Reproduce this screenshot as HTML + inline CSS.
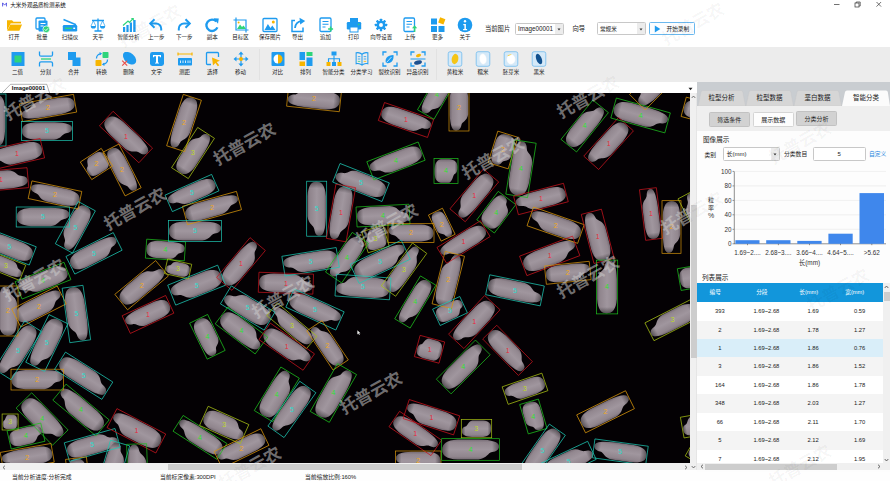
<!DOCTYPE html>
<html><head><meta charset="utf-8"><title>大米外观品质检测系统</title>
<style>
html,body{margin:0;padding:0}
body{width:890px;height:481px;overflow:hidden;position:relative;background:#fff;font-family:"Liberation Sans","Noto Sans CJK SC",sans-serif;color:#222}
div,span,svg{box-sizing:border-box}
.lb{position:absolute;width:40px;text-align:center;font-size:5.500px;line-height:8px;color:#222;white-space:nowrap}
.t{position:absolute;font-size:6px;line-height:8px;white-space:nowrap;color:#222}
.ptab{position:absolute;top:90.400px;height:15.500px;font-size:6.500px;line-height:16px;text-align:center;color:#222}
</style></head><body>
<!-- title bar -->
<svg style="position:absolute;left:1.500px;top:2.300px" width="5.200" height="5.200" viewBox="0 0 7 7"><path d="M0.800 6V1.200L3.500 4.200 6.200 1.200V6" stroke="#3a3adf" stroke-width="1.100" fill="none"/></svg>
<div class="t" style="left:10.300px;top:1.100px;font-size:5.550px;color:#111">大米外观品质检测系统</div>
<svg style="position:absolute;left:830px;top:0" width="60" height="10" viewBox="830 0 60 10"><path d="M834 4.500h5.500" stroke="#333" stroke-width="0.700"/><rect x="855" y="3" width="4" height="4" fill="none" stroke="#333" stroke-width="0.700"/><path d="M856.200 3V2h4v4h-1" fill="none" stroke="#333" stroke-width="0.700"/><path d="M876.500 2l4.600 4.600M881.100 2l-4.600 4.600" stroke="#333" stroke-width="0.700"/></svg>
<!-- toolbar row 2 bg -->
<div style="position:absolute;left:0;top:47px;width:890px;height:35px;background:#ececec"></div>
<div style="position:absolute;left:0;top:81.500px;width:890px;height:1px;background:#dcdcdc"></div>
<div style="position:absolute;left:258.500px;top:49px;width:1px;height:31px;background:#e2e2e2"></div>
<div style="position:absolute;left:435.500px;top:49px;width:1px;height:31px;background:#e2e2e2"></div>
<svg style="position:absolute;left:6px;top:16.500px" width="16" height="16" viewBox="0 0 16 16"><path d="M1 3.2h5l1.5 1.6H15v2H4.6L1 13.5z" fill="#f7b500"/><path d="M4.4 7.4H16l-2.6 6.4H1.2z" fill="#f7b500"/><path d="M4.6 6.8H15" stroke="#fff" stroke-width="0.7"/></svg>
<div class="lb" style="left:-6px;top:33.200px">打开</div>
<svg style="position:absolute;left:34px;top:16.500px" width="16" height="16" viewBox="0 0 16 16"><rect x="2" y="1" width="9" height="11" rx="1" fill="none" stroke="#1e9bef" stroke-width="1.3"/><rect x="4.5" y="3.5" width="9" height="11" rx="1" fill="#1e9bef"/><path d="M6.5 6.5h5M6.5 9h3" stroke="#fff" stroke-width="1"/><circle cx="12.3" cy="12.3" r="3.4" fill="#2ed47a" stroke="#fff" stroke-width="0.7"/><path d="M10.6 12.3l1.3 1.3 2.1-2.3" stroke="#fff" stroke-width="0.9" fill="none"/></svg>
<div class="lb" style="left:22px;top:33.200px">批量</div>
<svg style="position:absolute;left:62px;top:16.500px" width="16" height="16" viewBox="0 0 16 16"><path d="M1.5 2.5l12.5 5.2" stroke="#1e9bef" stroke-width="1.6"/><rect x="0.8" y="8" width="14.4" height="6.5" rx="1.2" fill="#1e9bef"/><rect x="3" y="10.6" width="7" height="1.4" fill="#2ed47a"/><rect x="11.3" y="10.6" width="1.8" height="1.4" fill="#fff"/></svg>
<div class="lb" style="left:50px;top:33.200px">扫描仪</div>
<svg style="position:absolute;left:90px;top:16.500px" width="16" height="16" viewBox="0 0 16 16"><path d="M8 1.5v12M4.5 14h7M2 3.5h12" stroke="#1e9bef" stroke-width="1.3" fill="none"/><path d="M0.8 9h5.2a2.6 2.6 0 0 1-5.2 0zM10 9h5.2a2.6 2.6 0 0 1-5.2 0z" fill="#1e9bef"/><path d="M3.4 3.8L1 9M3.4 3.8L5.8 9M12.6 3.8L10.2 9M12.6 3.8L15 9" stroke="#1e9bef" stroke-width="0.7"/></svg>
<div class="lb" style="left:78px;top:33.200px">天平</div>
<svg style="position:absolute;left:120.5px;top:16.500px" width="16" height="16" viewBox="0 0 16 16"><rect x="2" y="10" width="2.2" height="5" fill="#1e9bef"/><rect x="5.4" y="8" width="2.2" height="7" fill="#1e9bef"/><rect x="8.8" y="5.5" width="2.2" height="9.5" fill="#1e9bef"/><rect x="12.2" y="3" width="2.4" height="12" fill="#1e9bef"/><path d="M2 8.5L7 4l1.5 1.5L12 1.6" stroke="#2ed47a" stroke-width="1.2" fill="none"/><path d="M9.8 1h3v3z" fill="#2ed47a"/></svg>
<div class="lb" style="left:108.5px;top:33.200px">智能分析</div>
<svg style="position:absolute;left:148.3px;top:16.500px" width="16" height="16" viewBox="0 0 16 16"><path d="M6.5 2.2L2.2 6.5 6.5 10.8" stroke="#1e9bef" stroke-width="2" fill="none"/><path d="M2.8 6.5h5.2a5.2 5.2 0 0 1 5.2 5.2V13.5" stroke="#1e9bef" stroke-width="2" fill="none"/></svg>
<div class="lb" style="left:136.3px;top:33.200px">上一步</div>
<svg style="position:absolute;left:176.3px;top:16.500px" width="16" height="16" viewBox="0 0 16 16"><path d="M9.5 2.2L13.8 6.5 9.5 10.8" stroke="#1e9bef" stroke-width="2" fill="none"/><path d="M13.2 6.5H8a5.2 5.2 0 0 0-5.2 5.2V13.5" stroke="#1e9bef" stroke-width="2" fill="none"/></svg>
<div class="lb" style="left:164.3px;top:33.200px">下一步</div>
<svg style="position:absolute;left:204.3px;top:16.500px" width="16" height="16" viewBox="0 0 16 16"><path d="M13.4 10.4A5.7 5.7 0 1 1 12.3 4.4" stroke="#1e9bef" stroke-width="2.3" fill="none"/><path d="M9.6 1.2l5.2 0.2-0.8 5.4z" fill="#1e9bef"/></svg>
<div class="lb" style="left:192.3px;top:33.200px">副本</div>
<svg style="position:absolute;left:232.5px;top:16.500px" width="16" height="16" viewBox="0 0 16 16"><path d="M3 0.5v12.5h12.5M0.5 3h12.5v12.5" stroke="#1e9bef" stroke-width="1.2" fill="none"/><path d="M4 12l3-4.5 2 2.6 1.6-1.6L13 12z" fill="#2ed47a"/><circle cx="5.6" cy="5.4" r="1" fill="#f7b500"/></svg>
<div class="lb" style="left:220.5px;top:33.200px">目标区</div>
<svg style="position:absolute;left:262px;top:16.500px" width="16" height="16" viewBox="0 0 16 16"><rect x="1" y="1.5" width="14" height="13" rx="1" fill="none" stroke="#1e9bef" stroke-width="1.3"/><path d="M2.5 13l3.4-6 2.6 4 1.8-2.4L13.5 13z" fill="#1e9bef"/><circle cx="11.3" cy="5" r="1.5" fill="#f7b500"/></svg>
<div class="lb" style="left:250px;top:33.200px">保存图片</div>
<svg style="position:absolute;left:289.5px;top:16.500px" width="16" height="16" viewBox="0 0 16 16"><path d="M5 3.5H2v11h11v-4" stroke="#1e9bef" stroke-width="1.5" fill="none"/><path d="M5 11c0.5-4.2 3-6.4 6.5-6.8" stroke="#1e9bef" stroke-width="1.8" fill="none"/><path d="M9.5 0.8l5.7 3.2-5 3.6z" fill="#1e9bef"/></svg>
<div class="lb" style="left:277.5px;top:33.200px">导出</div>
<svg style="position:absolute;left:317.5px;top:16.500px" width="16" height="16" viewBox="0 0 16 16"><rect x="2" y="1" width="11" height="13.5" rx="1.2" fill="none" stroke="#1e9bef" stroke-width="1.3"/><path d="M4.5 4.5h6M4.5 7.3h6M4.5 10h3" stroke="#1e9bef" stroke-width="1.1"/><path d="M12.6 9.5v5M10.1 12h5" stroke="#2ed47a" stroke-width="1.5"/></svg>
<div class="lb" style="left:305.5px;top:33.200px">追加</div>
<svg style="position:absolute;left:345.5px;top:16.500px" width="16" height="16" viewBox="0 0 16 16"><rect x="4" y="1" width="8" height="4" fill="#1e9bef"/><rect x="0.8" y="5" width="14.4" height="7.5" rx="1.2" fill="#1e9bef"/><rect x="4" y="10" width="8" height="5" fill="#fff" stroke="#1e9bef" stroke-width="1"/><circle cx="12.7" cy="7.4" r="0.8" fill="#2ed47a"/></svg>
<div class="lb" style="left:333.5px;top:33.200px">打印</div>
<svg style="position:absolute;left:373.3px;top:16.500px" width="16" height="16" viewBox="0 0 16 16"><g transform="translate(8 8) scale(0.86) translate(-8 -8)"><g fill="#1e9bef"><circle cx="8" cy="8" r="5"/><rect x="6.6" y="0.8" width="2.8" height="3.4" rx="0.5" transform="rotate(0 8 8)"/><rect x="6.6" y="0.8" width="2.8" height="3.4" rx="0.5" transform="rotate(45 8 8)"/><rect x="6.6" y="0.8" width="2.8" height="3.4" rx="0.5" transform="rotate(90 8 8)"/><rect x="6.6" y="0.8" width="2.8" height="3.4" rx="0.5" transform="rotate(135 8 8)"/><rect x="6.6" y="0.8" width="2.8" height="3.4" rx="0.5" transform="rotate(180 8 8)"/><rect x="6.6" y="0.8" width="2.8" height="3.4" rx="0.5" transform="rotate(225 8 8)"/><rect x="6.6" y="0.8" width="2.8" height="3.4" rx="0.5" transform="rotate(270 8 8)"/><rect x="6.6" y="0.8" width="2.8" height="3.4" rx="0.5" transform="rotate(315 8 8)"/></g><circle cx="8" cy="8" r="2.3" fill="#fff"/></g></svg>
<div class="lb" style="left:361.3px;top:33.200px">向导设置</div>
<svg style="position:absolute;left:402px;top:16.500px" width="16" height="16" viewBox="0 0 16 16"><rect x="2" y="1" width="10.5" height="13.5" rx="1.2" fill="none" stroke="#1e9bef" stroke-width="1.3"/><path d="M4.5 4.5h5.5M4.5 7.3h5.5M4.5 10h3" stroke="#1e9bef" stroke-width="1.1"/><path d="M12.6 15v-5" stroke="#2ed47a" stroke-width="1.5"/><path d="M10 11.2l2.6-3 2.6 3z" fill="#2ed47a"/></svg>
<div class="lb" style="left:390px;top:33.200px">上传</div>
<svg style="position:absolute;left:429.5px;top:16.500px" width="16" height="16" viewBox="0 0 16 16"><rect x="1" y="1.5" width="6" height="6" fill="#1e9bef"/><rect x="1" y="9" width="6" height="6" fill="#1e9bef"/><rect x="8.5" y="9" width="6" height="6" fill="#1e9bef"/><rect x="9" y="1" width="5.6" height="5.6" fill="#f7b500" transform="rotate(20 11.8 3.8)"/></svg>
<div class="lb" style="left:417.5px;top:33.200px">更多</div>
<svg style="position:absolute;left:457px;top:16.500px" width="16" height="16" viewBox="0 0 16 16"><circle cx="8" cy="8" r="7.3" fill="#1e9bef"/><circle cx="8" cy="4.3" r="1.2" fill="#fff"/><path d="M6.3 7h2.6v5h1.2v1.2H6.1V12h1.3V8.2H6.3z" fill="#fff"/></svg>
<div class="lb" style="left:445px;top:33.200px">关于</div>
<svg style="position:absolute;left:9.600000000000001px;top:51px" width="16" height="16" viewBox="0 0 16 16"><rect x="1.5" y="1" width="13" height="14" fill="#1e9bef"/><rect x="4.5" y="4.5" width="7" height="7" fill="#2ed47a"/></svg>
<div class="lb" style="left:-2.3999999999999986px;top:67.600px">二值</div>
<svg style="position:absolute;left:37.6px;top:51px" width="16" height="16" viewBox="0 0 16 16"><path d="M1.5 0.5v3.2a1.5 1.5 0 0 0 1.5 1.5h10a1.5 1.5 0 0 0 1.5-1.5V0.5M1.5 15.5v-3.2a1.5 1.5 0 0 1 1.5-1.5h10a1.5 1.5 0 0 1 1.5 1.5v3.2" stroke="#1e9bef" stroke-width="1.3" fill="none"/><path d="M3 8h10" stroke="#2ed47a" stroke-width="1.3"/></svg>
<div class="lb" style="left:25.6px;top:67.600px">分割</div>
<svg style="position:absolute;left:65.6px;top:51px" width="16" height="16" viewBox="0 0 16 16"><rect x="2" y="1" width="8" height="8" fill="#1e9bef"/><rect x="6.5" y="6.5" width="8" height="8.5" fill="#1e9bef"/></svg>
<div class="lb" style="left:53.599999999999994px;top:67.600px">合并</div>
<svg style="position:absolute;left:93.6px;top:51px" width="16" height="16" viewBox="0 0 16 16"><rect x="8.5" y="1" width="6" height="6" rx="0.8" fill="#2ed47a"/><rect x="1.5" y="9" width="6" height="6" rx="0.8" fill="#f7b500"/><path d="M2.5 7.5A4.5 4.5 0 0 1 6.5 2.8M13.5 8.5a4.5 4.5 0 0 1-4 4.7" stroke="#1e9bef" stroke-width="1.3" fill="none"/><path d="M5.5 1l2.6 1.6-2.3 2zM10.5 15l-2.6-1.6 2.3-2z" fill="#1e9bef"/></svg>
<div class="lb" style="left:81.6px;top:67.600px">转换</div>
<svg style="position:absolute;left:120.6px;top:51px" width="16" height="16" viewBox="0 0 16 16"><ellipse cx="8.6" cy="7.2" rx="7.6" ry="5" fill="#1e9bef" transform="rotate(42 8.6 7.2)"/><circle cx="5" cy="3.6" r="2.6" fill="#1e9bef"/><path d="M1.2 9.6l5 5M6.2 9.6l-5 5" stroke="#e8504a" stroke-width="1.2"/></svg>
<div class="lb" style="left:108.6px;top:67.600px">删除</div>
<svg style="position:absolute;left:148.6px;top:51px" width="16" height="16" viewBox="0 0 16 16"><rect x="1" y="1" width="14" height="14" rx="2.4" fill="#1e9bef"/><path d="M4 4h8v2.300h-1l-0.300-1H9v6.200l1 0.300v0.800H6v-0.800l1-0.300V5.300H5.300L5 6.300H4z" fill="#fff"/></svg>
<div class="lb" style="left:136.6px;top:67.600px">文字</div>
<svg style="position:absolute;left:176.6px;top:51px" width="16" height="16" viewBox="0 0 16 16"><path d="M1 1.500v3M15 1.500v3M1 3h14" stroke="#f7b500" stroke-width="1.200"/><rect x="1" y="7" width="14" height="7.500" rx="0.800" fill="#1e9bef"/><path d="M3.500 9.500v2.500M6 9.500v2.500M8.500 9.500v2.500M11 9.500v2.500M13 9.500v2.500" stroke="#fff" stroke-width="0.800"/></svg>
<div class="lb" style="left:164.6px;top:67.600px">测距</div>
<svg style="position:absolute;left:204.6px;top:51px" width="16" height="16" viewBox="0 0 16 16"><path d="M13.500 6V2.500a1 1 0 0 0-1-1h-10a1 1 0 0 0-1 1v10a1 1 0 0 0 1 1H6" stroke="#1e9bef" stroke-width="1.300" fill="none"/><path d="M7 6.500l8 3.300-3.300 1.300 2.500 3.200-1.400 1-2.400-3.200L8 14.500z" fill="#f7b500"/></svg>
<div class="lb" style="left:192.6px;top:67.600px">选择</div>
<svg style="position:absolute;left:232.6px;top:51px" width="16" height="16" viewBox="0 0 16 16"><path d="M8 0.500l2.600 3H5.400zM8 15.500l2.600-3H5.400zM0.500 8l3-2.600v5.200zM15.500 8l-3-2.600v5.200z" fill="#1e9bef"/><path d="M8 3v10M3 8h10" stroke="#1e9bef" stroke-width="1.200"/><circle cx="8" cy="8" r="2" fill="#f7b500"/></svg>
<div class="lb" style="left:220.6px;top:67.600px">移动</div>
<svg style="position:absolute;left:269.6px;top:51px" width="16" height="16" viewBox="0 0 16 16"><rect x="1.500" y="1" width="13" height="14" rx="1" fill="#1e9bef"/><path d="M8 3.500a4.500 4.500 0 0 0 0 9z" fill="#fff"/><path d="M8 3.500a4.500 4.500 0 0 1 0 9z" fill="#f7b500"/></svg>
<div class="lb" style="left:257.6px;top:67.600px">对比</div>
<svg style="position:absolute;left:297.6px;top:51px" width="16" height="16" viewBox="0 0 16 16"><rect x="1.500" y="1" width="5.500" height="8" fill="#1e9bef"/><rect x="8.500" y="1" width="6" height="4" fill="#2ed47a"/><rect x="1.500" y="10.500" width="5.500" height="4.500" fill="#f7b500"/><rect x="8.500" y="6.500" width="6" height="8.500" fill="#1e9bef"/></svg>
<div class="lb" style="left:285.6px;top:67.600px">排列</div>
<svg style="position:absolute;left:325.6px;top:51px" width="16" height="16" viewBox="0 0 16 16"><rect x="5.500" y="0.500" width="5" height="4" fill="#1e9bef"/><path d="M8 4.500v3M2.500 11V7.800h11V11M8 7.800V11" stroke="#1e9bef" stroke-width="1.100" fill="none"/><rect x="0.500" y="11" width="4" height="4" fill="#f7b500"/><rect x="6" y="11" width="4" height="4" fill="#1e9bef"/><rect x="11.500" y="11" width="4" height="4" fill="#f7b500"/></svg>
<div class="lb" style="left:313.6px;top:67.600px">智能分类</div>
<svg style="position:absolute;left:353.6px;top:51px" width="16" height="16" viewBox="0 0 16 16"><g transform="translate(8 8) scale(0.84 0.95) translate(-8 -8)"><path d="M8 3c-2-1.700-4.500-2-7-1.500v11.500c2.500-0.500 5-0.200 7 1.500 2-1.700 4.500-2 7-1.500V1.500c-2.500-0.500-5-0.200-7 1.500zM8 3v11.500" stroke="#1e9bef" stroke-width="1.200" fill="none"/><path d="M3 5.500h3M3 8h3M10 5.500h3M10 8h3" stroke="#1e9bef" stroke-width="0.900"/><path d="M3 10.500h3" stroke="#2ed47a" stroke-width="0.900"/><path d="M10 10.500h3" stroke="#f7b500" stroke-width="0.900"/></g></svg>
<div class="lb" style="left:341.6px;top:67.600px">分类学习</div>
<svg style="position:absolute;left:381.6px;top:51px" width="16" height="16" viewBox="0 0 16 16"><path d="M1 4.500V1h3.500M11.500 1H15v3.500M15 11.500V15h-3.500M4.500 15H1v-3.500" stroke="#1e9bef" stroke-width="1.300" fill="none"/><path d="M4 12c-1.500-4 1-8 7.500-8 0.500 5-2 9-7.500 8z" fill="#1e9bef"/><path d="M4.500 11.500l5-5.500" stroke="#fff" stroke-width="0.700"/></svg>
<div class="lb" style="left:369.6px;top:67.600px">裂纹识别</div>
<svg style="position:absolute;left:409.6px;top:51px" width="16" height="16" viewBox="0 0 16 16"><path d="M1 4.500V1h3.500M11.500 1H15v3.500M15 11.500V15h-3.500M4.500 15H1v-3.500" stroke="#1e9bef" stroke-width="1.300" fill="none"/><ellipse cx="8.500" cy="4.500" rx="2.600" ry="1.600" fill="#f7b500" transform="rotate(-15 8.500 4.500)"/><path d="M0.500 8h15" stroke="#1e9bef" stroke-width="1"/><ellipse cx="8" cy="11.500" rx="4" ry="2" fill="#1b4f8f" transform="rotate(-15 8 11.500)"/></svg>
<div class="lb" style="left:397.6px;top:67.600px">异品识别</div>
<svg style="position:absolute;left:447px;top:51px" width="16" height="16" viewBox="0 0 16 16"><rect x="1.200" y="0.700" width="13.600" height="14.600" rx="2" fill="#d5e9f8" stroke="#62b4ee" stroke-width="0.700"/><ellipse cx="8" cy="8" rx="3.300" ry="5.200" fill="#f5c518" transform="rotate(12 8 8)"/></svg>
<div class="lb" style="left:435px;top:67.600px">黄粒米</div>
<svg style="position:absolute;left:475px;top:51px" width="16" height="16" viewBox="0 0 16 16"><rect x="1.200" y="0.700" width="13.600" height="14.600" rx="2" fill="#d5e9f8" stroke="#62b4ee" stroke-width="0.700"/><ellipse cx="8" cy="8" rx="3.500" ry="5.200" fill="#ffffff" stroke="#e4eef6" stroke-width="0.400" transform="rotate(-8 8 8)"/></svg>
<div class="lb" style="left:463px;top:67.600px">糯米</div>
<svg style="position:absolute;left:503px;top:51px" width="16" height="16" viewBox="0 0 16 16"><rect x="1.200" y="0.700" width="13.600" height="14.600" rx="2" fill="#d5e9f8" stroke="#62b4ee" stroke-width="0.700"/><ellipse cx="8" cy="8.300" rx="4.300" ry="5" fill="#ffffff" stroke="#e4eef6" stroke-width="0.400"/><path d="M4.300 5.200c1-1.800 3-2 4.500-1.400-1.500 0.200-3 0.800-4.500 1.400z" fill="#f5c518"/></svg>
<div class="lb" style="left:491px;top:67.600px">胚芽米</div>
<svg style="position:absolute;left:531px;top:51px" width="16" height="16" viewBox="0 0 16 16"><rect x="1.200" y="0.700" width="13.600" height="14.600" rx="2" fill="#d5e9f8" stroke="#62b4ee" stroke-width="0.700"/><ellipse cx="8" cy="8" rx="2.700" ry="5.500" fill="#11518f" transform="rotate(-22 8 8)"/></svg>
<div class="lb" style="left:519px;top:67.600px">黑米</div>
<!-- right side of row1 -->
<div class="t" style="left:485px;top:25px;font-size:6.300px">当前图片</div>
<div style="position:absolute;left:515px;top:22.500px;width:48.500px;height:12.500px;border:0.700px solid #c8c8c8;border-radius:1.500px;background:#fff"></div>
<div class="t" style="left:518px;top:24.500px;font-size:6.300px">Image00001</div>
<div style="position:absolute;left:554.500px;top:23.500px;width:8px;height:10.500px;background:#ececec"></div>
<svg style="position:absolute;left:556.500px;top:27.500px" width="4" height="3" viewBox="0 0 4 3"><path d="M0.500 0.500h3L2 2.500z" fill="#333"/></svg>
<div class="t" style="left:572.500px;top:25px;font-size:6.300px">向导</div>
<div style="position:absolute;left:597px;top:22px;width:48.500px;height:13px;border:0.700px solid #c8c8c8;border-radius:1.500px;background:#fff"></div>
<div class="t" style="left:600px;top:25px;font-size:5.600px">常规米</div>
<div style="position:absolute;left:636.500px;top:23px;width:8px;height:11px;background:#ececec"></div>
<svg style="position:absolute;left:638.500px;top:27.500px" width="4" height="3" viewBox="0 0 4 3"><path d="M0.500 0.500h3L2 2.500z" fill="#333"/></svg>
<div style="position:absolute;left:649px;top:21.500px;width:46px;height:13.500px;border:0.800px solid #6bb8ee;border-radius:1.500px;background:#fbfdff"></div>
<svg style="position:absolute;left:653.500px;top:24.500px" width="7" height="8" viewBox="0 0 7 8"><path d="M0.800 0.600L6.300 4 0.800 7.400z" fill="#1e9bef"/></svg>
<div class="t" style="left:666.500px;top:25px;font-size:5.700px">开始录制</div>
<!-- document tab strip -->
<div style="position:absolute;left:0;top:82px;width:697px;height:11px;background:#fff"></div>
<svg style="position:absolute;left:0;top:83px" width="60" height="10" viewBox="0 0 60 10"><path d="M2 10L10.500 1.300H46.800L49.600 10" fill="#fff" stroke="#666" stroke-width="0.500"/></svg>
<div class="t" style="left:11.800px;top:84.300px;font-size:5.900px;font-weight:bold;color:#111">Image00001</div>
<svg style="position:absolute;left:688px;top:87px" width="5" height="4" viewBox="0 0 5 4"><path d="M0.500 0.800h4L2.500 3.200z" fill="#222"/></svg>
<svg style="position:absolute;left:0;top:93px" width="690" height="370" viewBox="0 93 690 370">
<defs><linearGradient id="gg" x1="0" y1="0" x2="0" y2="1"><stop offset="0" stop-color="#776c75"/><stop offset="0.14" stop-color="#92878f"/><stop offset="0.5" stop-color="#a0969e"/><stop offset="0.86" stop-color="#90858d"/><stop offset="1" stop-color="#736871"/></linearGradient><linearGradient id="gh" x1="0" y1="0" x2="1" y2="0"><stop offset="0" stop-color="#040104" stop-opacity="0.45"/><stop offset="0.12" stop-color="#040104" stop-opacity="0"/><stop offset="0.88" stop-color="#040104" stop-opacity="0"/><stop offset="1" stop-color="#040104" stop-opacity="0.45"/></linearGradient></defs>
<rect x="0" y="93" width="690" height="370" fill="#040104"/>
<g transform="translate(-4,120) rotate(90)"><path d="M-25.40,0.37 C-25.40,-5.15 -21.84,-8.46 -11.68,-9.20 L7.62,-9.20 C19.30,-8.83 25.40,-6.99 25.40,-2.94 C25.40,0.37 22.86,1.84 19.30,2.39 C15.24,3.13 15.24,8.10 7.11,9.20 L-11.68,9.20 C-21.84,8.46 -25.40,5.52 -25.40,0.37Z" fill="url(#gg)"/><path d="M-25.40,0.37 C-25.40,-5.15 -21.84,-8.46 -11.68,-9.20 L7.62,-9.20 C19.30,-8.83 25.40,-6.99 25.40,-2.94 C25.40,0.37 22.86,1.84 19.30,2.39 C15.24,3.13 15.24,8.10 7.11,9.20 L-11.68,9.20 C-21.84,8.46 -25.40,5.52 -25.40,0.37Z" fill="url(#gh)"/></g>
<g transform="translate(48,108) rotate(-10)"><path d="M26.90,-0.33 C26.90,4.59 23.13,7.54 12.37,8.20 L-8.07,8.20 C-20.44,7.87 -26.90,6.23 -26.90,2.62 C-26.90,-0.33 -24.21,-1.64 -20.44,-2.13 C-16.14,-2.79 -16.14,-7.22 -7.53,-8.20 L12.37,-8.20 C23.13,-7.54 26.90,-4.92 26.90,-0.33Z" fill="url(#gg)"/><path d="M26.90,-0.33 C26.90,4.59 23.13,7.54 12.37,8.20 L-8.07,8.20 C-20.44,7.87 -26.90,6.23 -26.90,2.62 C-26.90,-0.33 -24.21,-1.64 -20.44,-2.13 C-16.14,-2.79 -16.14,-7.22 -7.53,-8.20 L12.37,-8.20 C23.13,-7.54 26.90,-4.92 26.90,-0.33Z" fill="url(#gh)"/></g>
<g transform="translate(47,131) rotate(0)"><path d="M-24.90,0.35 C-24.90,-4.87 -21.41,-8.00 -11.45,-8.70 L7.47,-8.70 C18.92,-8.35 24.90,-6.61 24.90,-2.78 C24.90,0.35 22.41,1.74 18.92,2.26 C14.94,2.96 14.94,7.66 6.97,8.70 L-11.45,8.70 C-21.41,8.00 -24.90,5.22 -24.90,0.35Z" fill="url(#gg)"/><path d="M-24.90,0.35 C-24.90,-4.87 -21.41,-8.00 -11.45,-8.70 L7.47,-8.70 C18.92,-8.35 24.90,-6.61 24.90,-2.78 C24.90,0.35 22.41,1.74 18.92,2.26 C14.94,2.96 14.94,7.66 6.97,8.70 L-11.45,8.70 C-21.41,8.00 -24.90,5.22 -24.90,0.35Z" fill="url(#gh)"/></g>
<g transform="translate(17,154) rotate(-13)"><path d="M25.40,0.37 C25.40,-5.15 21.84,-8.46 11.68,-9.20 L-7.62,-9.20 C-19.30,-8.83 -25.40,-6.99 -25.40,-2.94 C-25.40,0.37 -22.86,1.84 -19.30,2.39 C-15.24,3.13 -15.24,8.10 -7.11,9.20 L11.68,9.20 C21.84,8.46 25.40,5.52 25.40,0.37Z" fill="url(#gg)"/><path d="M25.40,0.37 C25.40,-5.15 21.84,-8.46 11.68,-9.20 L-7.62,-9.20 C-19.30,-8.83 -25.40,-6.99 -25.40,-2.94 C-25.40,0.37 -22.86,1.84 -19.30,2.39 C-15.24,3.13 -15.24,8.10 -7.11,9.20 L11.68,9.20 C21.84,8.46 25.40,5.52 25.40,0.37Z" fill="url(#gh)"/></g>
<g transform="translate(1,180) rotate(-5)"><path d="M-26.40,-0.37 C-26.40,5.15 -22.70,8.46 -12.14,9.20 L7.92,9.20 C20.06,8.83 26.40,6.99 26.40,2.94 C26.40,-0.37 23.76,-1.84 20.06,-2.39 C15.84,-3.13 15.84,-8.10 7.39,-9.20 L-12.14,-9.20 C-22.70,-8.46 -26.40,-5.52 -26.40,-0.37Z" fill="url(#gg)"/><path d="M-26.40,-0.37 C-26.40,5.15 -22.70,8.46 -12.14,9.20 L7.92,9.20 C20.06,8.83 26.40,6.99 26.40,2.94 C26.40,-0.37 23.76,-1.84 20.06,-2.39 C15.84,-3.13 15.84,-8.10 7.39,-9.20 L-12.14,-9.20 C-22.70,-8.46 -26.40,-5.52 -26.40,-0.37Z" fill="url(#gh)"/></g>
<g transform="translate(55,195) rotate(12)"><path d="M24.90,0.33 C24.90,-4.59 21.41,-7.54 11.45,-8.20 L-7.47,-8.20 C-18.92,-7.87 -24.90,-6.23 -24.90,-2.62 C-24.90,0.33 -22.41,1.64 -18.92,2.13 C-14.94,2.79 -14.94,7.22 -6.97,8.20 L11.45,8.20 C21.41,7.54 24.90,4.92 24.90,0.33Z" fill="url(#gg)"/><path d="M24.90,0.33 C24.90,-4.59 21.41,-7.54 11.45,-8.20 L-7.47,-8.20 C-18.92,-7.87 -24.90,-6.23 -24.90,-2.62 C-24.90,0.33 -22.41,1.64 -18.92,2.13 C-14.94,2.79 -14.94,7.22 -6.97,8.20 L11.45,8.20 C21.41,7.54 24.90,4.92 24.90,0.33Z" fill="url(#gh)"/></g>
<g transform="translate(126,137) rotate(43)"><path d="M-26.40,0.37 C-26.40,-5.15 -22.70,-8.46 -12.14,-9.20 L7.92,-9.20 C20.06,-8.83 26.40,-6.99 26.40,-2.94 C26.40,0.37 23.76,1.84 20.06,2.39 C15.84,3.13 15.84,8.10 7.39,9.20 L-12.14,9.20 C-22.70,8.46 -26.40,5.52 -26.40,0.37Z" fill="url(#gg)"/><path d="M-26.40,0.37 C-26.40,-5.15 -22.70,-8.46 -12.14,-9.20 L7.92,-9.20 C20.06,-8.83 26.40,-6.99 26.40,-2.94 C26.40,0.37 23.76,1.84 20.06,2.39 C15.84,3.13 15.84,8.10 7.39,9.20 L-12.14,9.20 C-22.70,8.46 -26.40,5.52 -26.40,0.37Z" fill="url(#gh)"/></g>
<g transform="translate(96.5,164) rotate(-33)"><path d="M11.90,-0.39 C11.90,5.43 10.23,8.92 5.47,9.70 L-3.57,9.70 C-9.04,9.31 -11.90,7.37 -11.90,3.10 C-11.90,-0.39 -10.71,-1.94 -9.04,-2.52 C-7.14,-3.30 -7.14,-8.54 -3.33,-9.70 L5.47,-9.70 C10.23,-8.92 11.90,-5.82 11.90,-0.39Z" fill="url(#gg)"/><path d="M11.90,-0.39 C11.90,5.43 10.23,8.92 5.47,9.70 L-3.57,9.70 C-9.04,9.31 -11.90,7.37 -11.90,3.10 C-11.90,-0.39 -10.71,-1.94 -9.04,-2.52 C-7.14,-3.30 -7.14,-8.54 -3.33,-9.70 L5.47,-9.70 C10.23,-8.92 11.90,-5.82 11.90,-0.39Z" fill="url(#gh)"/></g>
<g transform="translate(122,170) rotate(63)"><path d="M-23.90,0.33 C-23.90,-4.59 -20.55,-7.54 -10.99,-8.20 L7.17,-8.20 C18.16,-7.87 23.90,-6.23 23.90,-2.62 C23.90,0.33 21.51,1.64 18.16,2.13 C14.34,2.79 14.34,7.22 6.69,8.20 L-10.99,8.20 C-20.55,7.54 -23.90,4.92 -23.90,0.33Z" fill="url(#gg)"/><path d="M-23.90,0.33 C-23.90,-4.59 -20.55,-7.54 -10.99,-8.20 L7.17,-8.20 C18.16,-7.87 23.90,-6.23 23.90,-2.62 C23.90,0.33 21.51,1.64 18.16,2.13 C14.34,2.79 14.34,7.22 6.69,8.20 L-10.99,8.20 C-20.55,7.54 -23.90,4.92 -23.90,0.33Z" fill="url(#gh)"/></g>
<g transform="translate(184,123) rotate(-72)"><path d="M26.40,0.35 C26.40,-4.87 22.70,-8.00 12.14,-8.70 L-7.92,-8.70 C-20.06,-8.35 -26.40,-6.61 -26.40,-2.78 C-26.40,0.35 -23.76,1.74 -20.06,2.26 C-15.84,2.96 -15.84,7.66 -7.39,8.70 L12.14,8.70 C22.70,8.00 26.40,5.22 26.40,0.35Z" fill="url(#gg)"/><path d="M26.40,0.35 C26.40,-4.87 22.70,-8.00 12.14,-8.70 L-7.92,-8.70 C-20.06,-8.35 -26.40,-6.61 -26.40,-2.78 C-26.40,0.35 -23.76,1.74 -20.06,2.26 C-15.84,2.96 -15.84,7.66 -7.39,8.70 L12.14,8.70 C22.70,8.00 26.40,5.22 26.40,0.35Z" fill="url(#gh)"/></g>
<g transform="translate(193,153) rotate(-57)"><path d="M-23.40,-0.37 C-23.40,5.15 -20.12,8.46 -10.76,9.20 L7.02,9.20 C17.78,8.83 23.40,6.99 23.40,2.94 C23.40,-0.37 21.06,-1.84 17.78,-2.39 C14.04,-3.13 14.04,-8.10 6.55,-9.20 L-10.76,-9.20 C-20.12,-8.46 -23.40,-5.52 -23.40,-0.37Z" fill="url(#gg)"/><path d="M-23.40,-0.37 C-23.40,5.15 -20.12,8.46 -10.76,9.20 L7.02,9.20 C17.78,8.83 23.40,6.99 23.40,2.94 C23.40,-0.37 21.06,-1.84 17.78,-2.39 C14.04,-3.13 14.04,-8.10 6.55,-9.20 L-10.76,-9.20 C-20.12,-8.46 -23.40,-5.52 -23.40,-0.37Z" fill="url(#gh)"/></g>
<g transform="translate(192,193) rotate(-24)"><path d="M24.90,0.33 C24.90,-4.59 21.41,-7.54 11.45,-8.20 L-7.47,-8.20 C-18.92,-7.87 -24.90,-6.23 -24.90,-2.62 C-24.90,0.33 -22.41,1.64 -18.92,2.13 C-14.94,2.79 -14.94,7.22 -6.97,8.20 L11.45,8.20 C21.41,7.54 24.90,4.92 24.90,0.33Z" fill="url(#gg)"/><path d="M24.90,0.33 C24.90,-4.59 21.41,-7.54 11.45,-8.20 L-7.47,-8.20 C-18.92,-7.87 -24.90,-6.23 -24.90,-2.62 C-24.90,0.33 -22.41,1.64 -18.92,2.13 C-14.94,2.79 -14.94,7.22 -6.97,8.20 L11.45,8.20 C21.41,7.54 24.90,4.92 24.90,0.33Z" fill="url(#gh)"/></g>
<g transform="translate(212,208) rotate(-15.5)"><path d="M-27.40,0.35 C-27.40,-4.87 -23.56,-8.00 -12.60,-8.70 L8.22,-8.70 C20.82,-8.35 27.40,-6.61 27.40,-2.78 C27.40,0.35 24.66,1.74 20.82,2.26 C16.44,2.96 16.44,7.66 7.67,8.70 L-12.60,8.70 C-23.56,8.00 -27.40,5.22 -27.40,0.35Z" fill="url(#gg)"/><path d="M-27.40,0.35 C-27.40,-4.87 -23.56,-8.00 -12.60,-8.70 L8.22,-8.70 C20.82,-8.35 27.40,-6.61 27.40,-2.78 C27.40,0.35 24.66,1.74 20.82,2.26 C16.44,2.96 16.44,7.66 7.67,8.70 L-12.60,8.70 C-23.56,8.00 -27.40,5.22 -27.40,0.35Z" fill="url(#gh)"/></g>
<g transform="translate(314,99) rotate(6)"><path d="M25.90,-0.37 C25.90,5.15 22.27,8.46 11.91,9.20 L-7.77,9.20 C-19.68,8.83 -25.90,6.99 -25.90,2.94 C-25.90,-0.37 -23.31,-1.84 -19.68,-2.39 C-15.54,-3.13 -15.54,-8.10 -7.25,-9.20 L11.91,-9.20 C22.27,-8.46 25.90,-5.52 25.90,-0.37Z" fill="url(#gg)"/><path d="M25.90,-0.37 C25.90,5.15 22.27,8.46 11.91,9.20 L-7.77,9.20 C-19.68,8.83 -25.90,6.99 -25.90,2.94 C-25.90,-0.37 -23.31,-1.84 -19.68,-2.39 C-15.54,-3.13 -15.54,-8.10 -7.25,-9.20 L11.91,-9.20 C22.27,-8.46 25.90,-5.52 25.90,-0.37Z" fill="url(#gh)"/></g>
<g transform="translate(406,120) rotate(19)"><path d="M-25.40,0.35 C-25.40,-4.87 -21.84,-8.00 -11.68,-8.70 L7.62,-8.70 C19.30,-8.35 25.40,-6.61 25.40,-2.78 C25.40,0.35 22.86,1.74 19.30,2.26 C15.24,2.96 15.24,7.66 7.11,8.70 L-11.68,8.70 C-21.84,8.00 -25.40,5.22 -25.40,0.35Z" fill="url(#gg)"/><path d="M-25.40,0.35 C-25.40,-4.87 -21.84,-8.00 -11.68,-8.70 L7.62,-8.70 C19.30,-8.35 25.40,-6.61 25.40,-2.78 C25.40,0.35 22.86,1.74 19.30,2.26 C15.24,2.96 15.24,7.66 7.11,8.70 L-11.68,8.70 C-21.84,8.00 -25.40,5.22 -25.40,0.35Z" fill="url(#gh)"/></g>
<g transform="translate(437,95) rotate(-60)"><path d="M21.90,0.35 C21.90,-4.87 18.83,-8.00 10.07,-8.70 L-6.57,-8.70 C-16.64,-8.35 -21.90,-6.61 -21.90,-2.78 C-21.90,0.35 -19.71,1.74 -16.64,2.26 C-13.14,2.96 -13.14,7.66 -6.13,8.70 L10.07,8.70 C18.83,8.00 21.90,5.22 21.90,0.35Z" fill="url(#gg)"/><path d="M21.90,0.35 C21.90,-4.87 18.83,-8.00 10.07,-8.70 L-6.57,-8.70 C-16.64,-8.35 -21.90,-6.61 -21.90,-2.78 C-21.90,0.35 -19.71,1.74 -16.64,2.26 C-13.14,2.96 -13.14,7.66 -6.13,8.70 L10.07,8.70 C18.83,8.00 21.90,5.22 21.90,0.35Z" fill="url(#gh)"/></g>
<g transform="translate(459,108) rotate(90)"><path d="M-22.40,-0.37 C-22.40,5.15 -19.26,8.46 -10.30,9.20 L6.72,9.20 C17.02,8.83 22.40,6.99 22.40,2.94 C22.40,-0.37 20.16,-1.84 17.02,-2.39 C13.44,-3.13 13.44,-8.10 6.27,-9.20 L-10.30,-9.20 C-19.26,-8.46 -22.40,-5.52 -22.40,-0.37Z" fill="url(#gg)"/><path d="M-22.40,-0.37 C-22.40,5.15 -19.26,8.46 -10.30,9.20 L6.72,9.20 C17.02,8.83 22.40,6.99 22.40,2.94 C22.40,-0.37 20.16,-1.84 17.02,-2.39 C13.44,-3.13 13.44,-8.10 6.27,-9.20 L-10.30,-9.20 C-19.26,-8.46 -22.40,-5.52 -22.40,-0.37Z" fill="url(#gh)"/></g>
<g transform="translate(396,161) rotate(-21)"><path d="M26.90,0.36 C26.90,-5.01 23.13,-8.23 12.37,-8.95 L-8.07,-8.95 C-20.44,-8.59 -26.90,-6.80 -26.90,-2.86 C-26.90,0.36 -24.21,1.79 -20.44,2.33 C-16.14,3.04 -16.14,7.88 -7.53,8.95 L12.37,8.95 C23.13,8.23 26.90,5.37 26.90,0.36Z" fill="url(#gg)"/><path d="M26.90,0.36 C26.90,-5.01 23.13,-8.23 12.37,-8.95 L-8.07,-8.95 C-20.44,-8.59 -26.90,-6.80 -26.90,-2.86 C-26.90,0.36 -24.21,1.79 -20.44,2.33 C-16.14,3.04 -16.14,7.88 -7.53,8.95 L12.37,8.95 C23.13,8.23 26.90,5.37 26.90,0.36Z" fill="url(#gh)"/></g>
<g transform="translate(446,171) rotate(0)"><path d="M-11.40,0.47 C-11.40,-6.55 -9.80,-10.76 -5.24,-11.70 L3.42,-11.70 C8.66,-11.23 11.40,-8.89 11.40,-3.74 C11.40,0.47 10.26,2.34 8.66,3.04 C6.84,3.98 6.84,10.30 3.19,11.70 L-5.24,11.70 C-9.80,10.76 -11.40,7.02 -11.40,0.47Z" fill="url(#gg)"/><path d="M-11.40,0.47 C-11.40,-6.55 -9.80,-10.76 -5.24,-11.70 L3.42,-11.70 C8.66,-11.23 11.40,-8.89 11.40,-3.74 C11.40,0.47 10.26,2.34 8.66,3.04 C6.84,3.98 6.84,10.30 3.19,11.70 L-5.24,11.70 C-9.80,10.76 -11.40,7.02 -11.40,0.47Z" fill="url(#gh)"/></g>
<g transform="translate(361,182.5) rotate(21.5)"><path d="M25.90,-0.37 C25.90,5.15 22.27,8.46 11.91,9.20 L-7.77,9.20 C-19.68,8.83 -25.90,6.99 -25.90,2.94 C-25.90,-0.37 -23.31,-1.84 -19.68,-2.39 C-15.54,-3.13 -15.54,-8.10 -7.25,-9.20 L11.91,-9.20 C22.27,-8.46 25.90,-5.52 25.90,-0.37Z" fill="url(#gg)"/><path d="M25.90,-0.37 C25.90,5.15 22.27,8.46 11.91,9.20 L-7.77,9.20 C-19.68,8.83 -25.90,6.99 -25.90,2.94 C-25.90,-0.37 -23.31,-1.84 -19.68,-2.39 C-15.54,-3.13 -15.54,-8.10 -7.25,-9.20 L11.91,-9.20 C22.27,-8.46 25.90,-5.52 25.90,-0.37Z" fill="url(#gh)"/></g>
<g transform="translate(316.7,208.7) rotate(90)"><path d="M-26.90,0.37 C-26.90,-5.15 -23.13,-8.46 -12.37,-9.20 L8.07,-9.20 C20.44,-8.83 26.90,-6.99 26.90,-2.94 C26.90,0.37 24.21,1.84 20.44,2.39 C16.14,3.13 16.14,8.10 7.53,9.20 L-12.37,9.20 C-23.13,8.46 -26.90,5.52 -26.90,0.37Z" fill="url(#gg)"/><path d="M-26.90,0.37 C-26.90,-5.15 -23.13,-8.46 -12.37,-9.20 L8.07,-9.20 C20.44,-8.83 26.90,-6.99 26.90,-2.94 C26.90,0.37 24.21,1.84 20.44,2.39 C16.14,3.13 16.14,8.10 7.53,9.20 L-12.37,9.20 C-23.13,8.46 -26.90,5.52 -26.90,0.37Z" fill="url(#gh)"/></g>
<g transform="translate(341,213) rotate(-80)"><path d="M26.90,0.37 C26.90,-5.15 23.13,-8.46 12.37,-9.20 L-8.07,-9.20 C-20.44,-8.83 -26.90,-6.99 -26.90,-2.94 C-26.90,0.37 -24.21,1.84 -20.44,2.39 C-16.14,3.13 -16.14,8.10 -7.53,9.20 L12.37,9.20 C23.13,8.46 26.90,5.52 26.90,0.37Z" fill="url(#gg)"/><path d="M26.90,0.37 C26.90,-5.15 23.13,-8.46 12.37,-9.20 L-8.07,-9.20 C-20.44,-8.83 -26.90,-6.99 -26.90,-2.94 C-26.90,0.37 -24.21,1.84 -20.44,2.39 C-16.14,3.13 -16.14,8.10 -7.53,9.20 L12.37,9.20 C23.13,8.46 26.90,5.52 26.90,0.37Z" fill="url(#gh)"/></g>
<g transform="translate(383,215.6) rotate(-3)"><path d="M-25.90,-0.37 C-25.90,5.15 -22.27,8.46 -11.91,9.20 L7.77,9.20 C19.68,8.83 25.90,6.99 25.90,2.94 C25.90,-0.37 23.31,-1.84 19.68,-2.39 C15.54,-3.13 15.54,-8.10 7.25,-9.20 L-11.91,-9.20 C-22.27,-8.46 -25.90,-5.52 -25.90,-0.37Z" fill="url(#gg)"/><path d="M-25.90,-0.37 C-25.90,5.15 -22.27,8.46 -11.91,9.20 L7.77,9.20 C19.68,8.83 25.90,6.99 25.90,2.94 C25.90,-0.37 23.31,-1.84 19.68,-2.39 C15.54,-3.13 15.54,-8.10 7.25,-9.20 L-11.91,-9.20 C-22.27,-8.46 -25.90,-5.52 -25.90,-0.37Z" fill="url(#gh)"/></g>
<g transform="translate(503,150) rotate(-73)"><path d="M15.90,0.39 C15.90,-5.43 13.67,-8.92 7.31,-9.70 L-4.77,-9.70 C-12.08,-9.31 -15.90,-7.37 -15.90,-3.10 C-15.90,0.39 -14.31,1.94 -12.08,2.52 C-9.54,3.30 -9.54,8.54 -4.45,9.70 L7.31,9.70 C13.67,8.92 15.90,5.82 15.90,0.39Z" fill="url(#gg)"/><path d="M15.90,0.39 C15.90,-5.43 13.67,-8.92 7.31,-9.70 L-4.77,-9.70 C-12.08,-9.31 -15.90,-7.37 -15.90,-3.10 C-15.90,0.39 -14.31,1.94 -12.08,2.52 C-9.54,3.30 -9.54,8.54 -4.45,9.70 L7.31,9.70 C13.67,8.92 15.90,5.82 15.90,0.39Z" fill="url(#gh)"/></g>
<g transform="translate(521,168.7) rotate(-81)"><path d="M-26.90,0.41 C-26.90,-5.71 -23.13,-9.38 -12.37,-10.20 L8.07,-10.20 C20.44,-9.79 26.90,-7.75 26.90,-3.26 C26.90,0.41 24.21,2.04 20.44,2.65 C16.14,3.47 16.14,8.98 7.53,10.20 L-12.37,10.20 C-23.13,9.38 -26.90,6.12 -26.90,0.41Z" fill="url(#gg)"/><path d="M-26.90,0.41 C-26.90,-5.71 -23.13,-9.38 -12.37,-10.20 L8.07,-10.20 C20.44,-9.79 26.90,-7.75 26.90,-3.26 C26.90,0.41 24.21,2.04 20.44,2.65 C16.14,3.47 16.14,8.98 7.53,10.20 L-12.37,10.20 C-23.13,9.38 -26.90,6.12 -26.90,0.41Z" fill="url(#gh)"/></g>
<g transform="translate(474.3,195.4) rotate(-50)"><path d="M25.40,-0.37 C25.40,5.15 21.84,8.46 11.68,9.20 L-7.62,9.20 C-19.30,8.83 -25.40,6.99 -25.40,2.94 C-25.40,-0.37 -22.86,-1.84 -19.30,-2.39 C-15.24,-3.13 -15.24,-8.10 -7.11,-9.20 L11.68,-9.20 C21.84,-8.46 25.40,-5.52 25.40,-0.37Z" fill="url(#gg)"/><path d="M25.40,-0.37 C25.40,5.15 21.84,8.46 11.68,9.20 L-7.62,9.20 C-19.30,8.83 -25.40,6.99 -25.40,2.94 C-25.40,-0.37 -22.86,-1.84 -19.30,-2.39 C-15.24,-3.13 -15.24,-8.10 -7.11,-9.20 L11.68,-9.20 C21.84,-8.46 25.40,-5.52 25.40,-0.37Z" fill="url(#gh)"/></g>
<g transform="translate(496.3,212.2) rotate(-53)"><path d="M-17.20,0.41 C-17.20,-5.71 -14.79,-9.38 -7.91,-10.20 L5.16,-10.20 C13.07,-9.79 17.20,-7.75 17.20,-3.26 C17.20,0.41 15.48,2.04 13.07,2.65 C10.32,3.47 10.32,8.98 4.82,10.20 L-7.91,10.20 C-14.79,9.38 -17.20,6.12 -17.20,0.41Z" fill="url(#gg)"/><path d="M-17.20,0.41 C-17.20,-5.71 -14.79,-9.38 -7.91,-10.20 L5.16,-10.20 C13.07,-9.79 17.20,-7.75 17.20,-3.26 C17.20,0.41 15.48,2.04 13.07,2.65 C10.32,3.47 10.32,8.98 4.82,10.20 L-7.91,10.20 C-14.79,9.38 -17.20,6.12 -17.20,0.41Z" fill="url(#gh)"/></g>
<g transform="translate(541,199) rotate(-14.6)"><path d="M25.15,0.35 C25.15,-4.87 21.63,-8.00 11.57,-8.70 L-7.54,-8.70 C-19.11,-8.35 -25.15,-6.61 -25.15,-2.78 C-25.15,0.35 -22.63,1.74 -19.11,2.26 C-15.09,2.96 -15.09,7.66 -7.04,8.70 L11.57,8.70 C21.63,8.00 25.15,5.22 25.15,0.35Z" fill="url(#gg)"/><path d="M25.15,0.35 C25.15,-4.87 21.63,-8.00 11.57,-8.70 L-7.54,-8.70 C-19.11,-8.35 -25.15,-6.61 -25.15,-2.78 C-25.15,0.35 -22.63,1.74 -19.11,2.26 C-15.09,2.96 -15.09,7.66 -7.04,8.70 L11.57,8.70 C21.63,8.00 25.15,5.22 25.15,0.35Z" fill="url(#gh)"/></g>
<g transform="translate(584.7,126) rotate(-51)"><path d="M-24.70,-0.37 C-24.70,5.15 -21.24,8.46 -11.36,9.20 L7.41,9.20 C18.77,8.83 24.70,6.99 24.70,2.94 C24.70,-0.37 22.23,-1.84 18.77,-2.39 C14.82,-3.13 14.82,-8.10 6.92,-9.20 L-11.36,-9.20 C-21.24,-8.46 -24.70,-5.52 -24.70,-0.37Z" fill="url(#gg)"/><path d="M-24.70,-0.37 C-24.70,5.15 -21.24,8.46 -11.36,9.20 L7.41,9.20 C18.77,8.83 24.70,6.99 24.70,2.94 C24.70,-0.37 22.23,-1.84 18.77,-2.39 C14.82,-3.13 14.82,-8.10 6.92,-9.20 L-11.36,-9.20 C-21.24,-8.46 -24.70,-5.52 -24.70,-0.37Z" fill="url(#gh)"/></g>
<g transform="translate(608.6,143.5) rotate(-48)"><path d="M25.40,0.37 C25.40,-5.15 21.84,-8.46 11.68,-9.20 L-7.62,-9.20 C-19.30,-8.83 -25.40,-6.99 -25.40,-2.94 C-25.40,0.37 -22.86,1.84 -19.30,2.39 C-15.24,3.13 -15.24,8.10 -7.11,9.20 L11.68,9.20 C21.84,8.46 25.40,5.52 25.40,0.37Z" fill="url(#gg)"/><path d="M25.40,0.37 C25.40,-5.15 21.84,-8.46 11.68,-9.20 L-7.62,-9.20 C-19.30,-8.83 -25.40,-6.99 -25.40,-2.94 C-25.40,0.37 -22.86,1.84 -19.30,2.39 C-15.24,3.13 -15.24,8.10 -7.11,9.20 L11.68,9.20 C21.84,8.46 25.40,5.52 25.40,0.37Z" fill="url(#gh)"/></g>
<g transform="translate(640.6,115.4) rotate(15.4)"><path d="M-27.40,0.38 C-27.40,-5.35 -23.56,-8.79 -12.60,-9.55 L8.22,-9.55 C20.82,-9.17 27.40,-7.26 27.40,-3.06 C27.40,0.38 24.66,1.91 20.82,2.48 C16.44,3.25 16.44,8.40 7.67,9.55 L-12.60,9.55 C-23.56,8.79 -27.40,5.73 -27.40,0.38Z" fill="url(#gg)"/><path d="M-27.40,0.38 C-27.40,-5.35 -23.56,-8.79 -12.60,-9.55 L8.22,-9.55 C20.82,-9.17 27.40,-7.26 27.40,-3.06 C27.40,0.38 24.66,1.91 20.82,2.48 C16.44,3.25 16.44,8.40 7.67,9.55 L-12.60,9.55 C-23.56,8.79 -27.40,5.73 -27.40,0.38Z" fill="url(#gh)"/></g>
<g transform="translate(655,84.5) rotate(-45)"><path d="M24.40,-0.41 C24.40,5.71 20.98,9.38 11.22,10.20 L-7.32,10.20 C-18.54,9.79 -24.40,7.75 -24.40,3.26 C-24.40,-0.41 -21.96,-2.04 -18.54,-2.65 C-14.64,-3.47 -14.64,-8.98 -6.83,-10.20 L11.22,-10.20 C20.98,-9.38 24.40,-6.12 24.40,-0.41Z" fill="url(#gg)"/><path d="M24.40,-0.41 C24.40,5.71 20.98,9.38 11.22,10.20 L-7.32,10.20 C-18.54,9.79 -24.40,7.75 -24.40,3.26 C-24.40,-0.41 -21.96,-2.04 -18.54,-2.65 C-14.64,-3.47 -14.64,-8.98 -6.83,-10.20 L11.22,-10.20 C20.98,-9.38 24.40,-6.12 24.40,-0.41Z" fill="url(#gh)"/></g>
<g transform="translate(703,112) rotate(15)"><path d="M-19.40,0.37 C-19.40,-5.15 -16.68,-8.46 -8.92,-9.20 L5.82,-9.20 C14.74,-8.83 19.40,-6.99 19.40,-2.94 C19.40,0.37 17.46,1.84 14.74,2.39 C11.64,3.13 11.64,8.10 5.43,9.20 L-8.92,9.20 C-16.68,8.46 -19.40,5.52 -19.40,0.37Z" fill="url(#gg)"/><path d="M-19.40,0.37 C-19.40,-5.15 -16.68,-8.46 -8.92,-9.20 L5.82,-9.20 C14.74,-8.83 19.40,-6.99 19.40,-2.94 C19.40,0.37 17.46,1.84 14.74,2.39 C11.64,3.13 11.64,8.10 5.43,9.20 L-8.92,9.20 C-16.68,8.46 -19.40,5.52 -19.40,0.37Z" fill="url(#gh)"/></g>
<g transform="translate(651,214) rotate(83)"><path d="M24.90,0.31 C24.90,-4.31 21.41,-7.08 11.45,-7.70 L-7.47,-7.70 C-18.92,-7.39 -24.90,-5.85 -24.90,-2.46 C-24.90,0.31 -22.41,1.54 -18.92,2.00 C-14.94,2.62 -14.94,6.78 -6.97,7.70 L11.45,7.70 C21.41,7.08 24.90,4.62 24.90,0.31Z" fill="url(#gg)"/><path d="M24.90,0.31 C24.90,-4.31 21.41,-7.08 11.45,-7.70 L-7.47,-7.70 C-18.92,-7.39 -24.90,-5.85 -24.90,-2.46 C-24.90,0.31 -22.41,1.54 -18.92,2.00 C-14.94,2.62 -14.94,6.78 -6.97,7.70 L11.45,7.70 C21.41,7.08 24.90,4.62 24.90,0.31Z" fill="url(#gh)"/></g>
<g transform="translate(671.5,227) rotate(90)"><path d="M-25.70,-0.35 C-25.70,4.87 -22.10,8.00 -11.82,8.70 L7.71,8.70 C19.53,8.35 25.70,6.61 25.70,2.78 C25.70,-0.35 23.13,-1.74 19.53,-2.26 C15.42,-2.96 15.42,-7.66 7.20,-8.70 L-11.82,-8.70 C-22.10,-8.00 -25.70,-5.22 -25.70,-0.35Z" fill="url(#gg)"/><path d="M-25.70,-0.35 C-25.70,4.87 -22.10,8.00 -11.82,8.70 L7.71,8.70 C19.53,8.35 25.70,6.61 25.70,2.78 C25.70,-0.35 23.13,-1.74 19.53,-2.26 C15.42,-2.96 15.42,-7.66 7.20,-8.70 L-11.82,-8.70 C-22.10,-8.00 -25.70,-5.22 -25.70,-0.35Z" fill="url(#gh)"/></g>
<g transform="translate(698.5,216.3) rotate(62)"><path d="M24.40,0.37 C24.40,-5.15 20.98,-8.46 11.22,-9.20 L-7.32,-9.20 C-18.54,-8.83 -24.40,-6.99 -24.40,-2.94 C-24.40,0.37 -21.96,1.84 -18.54,2.39 C-14.64,3.13 -14.64,8.10 -6.83,9.20 L11.22,9.20 C20.98,8.46 24.40,5.52 24.40,0.37Z" fill="url(#gg)"/><path d="M24.40,0.37 C24.40,-5.15 20.98,-8.46 11.22,-9.20 L-7.32,-9.20 C-18.54,-8.83 -24.40,-6.99 -24.40,-2.94 C-24.40,0.37 -21.96,1.84 -18.54,2.39 C-14.64,3.13 -14.64,8.10 -6.83,9.20 L11.22,9.20 C20.98,8.46 24.40,5.52 24.40,0.37Z" fill="url(#gh)"/></g>
<g transform="translate(43,217) rotate(0)"><path d="M-26.15,0.37 C-26.15,-5.15 -22.49,-8.46 -12.03,-9.20 L7.84,-9.20 C19.87,-8.83 26.15,-6.99 26.15,-2.94 C26.15,0.37 23.54,1.84 19.87,2.39 C15.69,3.13 15.69,8.10 7.32,9.20 L-12.03,9.20 C-22.49,8.46 -26.15,5.52 -26.15,0.37Z" fill="url(#gg)"/><path d="M-26.15,0.37 C-26.15,-5.15 -22.49,-8.46 -12.03,-9.20 L7.84,-9.20 C19.87,-8.83 26.15,-6.99 26.15,-2.94 C26.15,0.37 23.54,1.84 19.87,2.39 C15.69,3.13 15.69,8.10 7.32,9.20 L-12.03,9.20 C-22.49,8.46 -26.15,5.52 -26.15,0.37Z" fill="url(#gh)"/></g>
<g transform="translate(75.4,227.3) rotate(-61.5)"><path d="M23.40,-0.36 C23.40,5.01 20.12,8.23 10.76,8.95 L-7.02,8.95 C-17.78,8.59 -23.40,6.80 -23.40,2.86 C-23.40,-0.36 -21.06,-1.79 -17.78,-2.33 C-14.04,-3.04 -14.04,-7.88 -6.55,-8.95 L10.76,-8.95 C20.12,-8.23 23.40,-5.37 23.40,-0.36Z" fill="url(#gg)"/><path d="M23.40,-0.36 C23.40,5.01 20.12,8.23 10.76,8.95 L-7.02,8.95 C-17.78,8.59 -23.40,6.80 -23.40,2.86 C-23.40,-0.36 -21.06,-1.79 -17.78,-2.33 C-14.04,-3.04 -14.04,-7.88 -6.55,-8.95 L10.76,-8.95 C20.12,-8.23 23.40,-5.37 23.40,-0.36Z" fill="url(#gh)"/></g>
<g transform="translate(94,253.3) rotate(-26.8)"><path d="M-25.90,0.36 C-25.90,-5.07 -22.27,-8.33 -11.91,-9.05 L7.77,-9.05 C19.68,-8.69 25.90,-6.88 25.90,-2.90 C25.90,0.36 23.31,1.81 19.68,2.35 C15.54,3.08 15.54,7.96 7.25,9.05 L-11.91,9.05 C-22.27,8.33 -25.90,5.43 -25.90,0.36Z" fill="url(#gg)"/><path d="M-25.90,0.36 C-25.90,-5.07 -22.27,-8.33 -11.91,-9.05 L7.77,-9.05 C19.68,-8.69 25.90,-6.88 25.90,-2.90 C25.90,0.36 23.31,1.81 19.68,2.35 C15.54,3.08 15.54,7.96 7.25,9.05 L-11.91,9.05 C-22.27,8.33 -25.90,5.43 -25.90,0.36Z" fill="url(#gh)"/></g>
<g transform="translate(9.4,247) rotate(21)"><path d="M24.40,0.36 C24.40,-5.01 20.98,-8.23 11.22,-8.95 L-7.32,-8.95 C-18.54,-8.59 -24.40,-6.80 -24.40,-2.86 C-24.40,0.36 -21.96,1.79 -18.54,2.33 C-14.64,3.04 -14.64,7.88 -6.83,8.95 L11.22,8.95 C20.98,8.23 24.40,5.37 24.40,0.36Z" fill="url(#gg)"/><path d="M24.40,0.36 C24.40,-5.01 20.98,-8.23 11.22,-8.95 L-7.32,-8.95 C-18.54,-8.59 -24.40,-6.80 -24.40,-2.86 C-24.40,0.36 -21.96,1.79 -18.54,2.33 C-14.64,3.04 -14.64,7.88 -6.83,8.95 L11.22,8.95 C20.98,8.23 24.40,5.37 24.40,0.36Z" fill="url(#gh)"/></g>
<g transform="translate(6,266) rotate(22)"><path d="M-17.40,-0.30 C-17.40,4.17 -14.96,6.85 -8.00,7.45 L5.22,7.45 C13.22,7.15 17.40,5.66 17.40,2.38 C17.40,-0.30 15.66,-1.49 13.22,-1.94 C10.44,-2.53 10.44,-6.56 4.87,-7.45 L-8.00,-7.45 C-14.96,-6.85 -17.40,-4.47 -17.40,-0.30Z" fill="url(#gg)"/><path d="M-17.40,-0.30 C-17.40,4.17 -14.96,6.85 -8.00,7.45 L5.22,7.45 C13.22,7.15 17.40,5.66 17.40,2.38 C17.40,-0.30 15.66,-1.49 13.22,-1.94 C10.44,-2.53 10.44,-6.56 4.87,-7.45 L-8.00,-7.45 C-14.96,-6.85 -17.40,-4.47 -17.40,-0.30Z" fill="url(#gh)"/></g>
<g transform="translate(43,280.6) rotate(-21.7)"><path d="M25.70,0.34 C25.70,-4.79 22.10,-7.87 11.82,-8.55 L-7.71,-8.55 C-19.53,-8.21 -25.70,-6.50 -25.70,-2.74 C-25.70,0.34 -23.13,1.71 -19.53,2.22 C-15.42,2.91 -15.42,7.52 -7.20,8.55 L11.82,8.55 C22.10,7.87 25.70,5.13 25.70,0.34Z" fill="url(#gg)"/><path d="M25.70,0.34 C25.70,-4.79 22.10,-7.87 11.82,-8.55 L-7.71,-8.55 C-19.53,-8.21 -25.70,-6.50 -25.70,-2.74 C-25.70,0.34 -23.13,1.71 -19.53,2.22 C-15.42,2.91 -15.42,7.52 -7.20,8.55 L11.82,8.55 C22.10,7.87 25.70,5.13 25.70,0.34Z" fill="url(#gh)"/></g>
<g transform="translate(39,306.5) rotate(-27)"><path d="M-24.90,0.37 C-24.90,-5.15 -21.41,-8.46 -11.45,-9.20 L7.47,-9.20 C18.92,-8.83 24.90,-6.99 24.90,-2.94 C24.90,0.37 22.41,1.84 18.92,2.39 C14.94,3.13 14.94,8.10 6.97,9.20 L-11.45,9.20 C-21.41,8.46 -24.90,5.52 -24.90,0.37Z" fill="url(#gg)"/><path d="M-24.90,0.37 C-24.90,-5.15 -21.41,-8.46 -11.45,-9.20 L7.47,-9.20 C18.92,-8.83 24.90,-6.99 24.90,-2.94 C24.90,0.37 22.41,1.84 18.92,2.39 C14.94,3.13 14.94,8.10 6.97,9.20 L-11.45,9.20 C-21.41,8.46 -24.90,5.52 -24.90,0.37Z" fill="url(#gh)"/></g>
<g transform="translate(8,311) rotate(90)"><path d="M24.40,-0.37 C24.40,5.15 20.98,8.46 11.22,9.20 L-7.32,9.20 C-18.54,8.83 -24.40,6.99 -24.40,2.94 C-24.40,-0.37 -21.96,-1.84 -18.54,-2.39 C-14.64,-3.13 -14.64,-8.10 -6.83,-9.20 L11.22,-9.20 C20.98,-8.46 24.40,-5.52 24.40,-0.37Z" fill="url(#gg)"/><path d="M24.40,-0.37 C24.40,5.15 20.98,8.46 11.22,9.20 L-7.32,9.20 C-18.54,8.83 -24.40,6.99 -24.40,2.94 C-24.40,-0.37 -21.96,-1.84 -18.54,-2.39 C-14.64,-3.13 -14.64,-8.10 -6.83,-9.20 L11.22,-9.20 C20.98,-8.46 24.40,-5.52 24.40,-0.37Z" fill="url(#gh)"/></g>
<g transform="translate(76.4,314) rotate(82)"><path d="M-26.90,0.39 C-26.90,-5.43 -23.13,-8.92 -12.37,-9.70 L8.07,-9.70 C20.44,-9.31 26.90,-7.37 26.90,-3.10 C26.90,0.39 24.21,1.94 20.44,2.52 C16.14,3.30 16.14,8.54 7.53,9.70 L-12.37,9.70 C-23.13,8.92 -26.90,5.82 -26.90,0.39Z" fill="url(#gg)"/><path d="M-26.90,0.39 C-26.90,-5.43 -23.13,-8.92 -12.37,-9.70 L8.07,-9.70 C20.44,-9.31 26.90,-7.37 26.90,-3.10 C26.90,0.39 24.21,1.94 20.44,2.52 C16.14,3.30 16.14,8.54 7.53,9.70 L-12.37,9.70 C-23.13,8.92 -26.90,5.82 -26.90,0.39Z" fill="url(#gh)"/></g>
<g transform="translate(46.8,343) rotate(-64)"><path d="M25.90,0.39 C25.90,-5.43 22.27,-8.92 11.91,-9.70 L-7.77,-9.70 C-19.68,-9.31 -25.90,-7.37 -25.90,-3.10 C-25.90,0.39 -23.31,1.94 -19.68,2.52 C-15.54,3.30 -15.54,8.54 -7.25,9.70 L11.91,9.70 C22.27,8.92 25.90,5.82 25.90,0.39Z" fill="url(#gg)"/><path d="M25.90,0.39 C25.90,-5.43 22.27,-8.92 11.91,-9.70 L-7.77,-9.70 C-19.68,-9.31 -25.90,-7.37 -25.90,-3.10 C-25.90,0.39 -23.31,1.94 -19.68,2.52 C-15.54,3.30 -15.54,8.54 -7.25,9.70 L11.91,9.70 C22.27,8.92 25.90,5.82 25.90,0.39Z" fill="url(#gh)"/></g>
<g transform="translate(141.6,285.2) rotate(-39.6)"><path d="M-25.90,-0.37 C-25.90,5.15 -22.27,8.46 -11.91,9.20 L7.77,9.20 C19.68,8.83 25.90,6.99 25.90,2.94 C25.90,-0.37 23.31,-1.84 19.68,-2.39 C15.54,-3.13 15.54,-8.10 7.25,-9.20 L-11.91,-9.20 C-22.27,-8.46 -25.90,-5.52 -25.90,-0.37Z" fill="url(#gg)"/><path d="M-25.90,-0.37 C-25.90,5.15 -22.27,8.46 -11.91,9.20 L7.77,9.20 C19.68,8.83 25.90,6.99 25.90,2.94 C25.90,-0.37 23.31,-1.84 19.68,-2.39 C15.54,-3.13 15.54,-8.10 7.25,-9.20 L-11.91,-9.20 C-22.27,-8.46 -25.90,-5.52 -25.90,-0.37Z" fill="url(#gh)"/></g>
<g transform="translate(148,314.5) rotate(-25)"><path d="M23.40,0.36 C23.40,-5.01 20.12,-8.23 10.76,-8.95 L-7.02,-8.95 C-17.78,-8.59 -23.40,-6.80 -23.40,-2.86 C-23.40,0.36 -21.06,1.79 -17.78,2.33 C-14.04,3.04 -14.04,7.88 -6.55,8.95 L10.76,8.95 C20.12,8.23 23.40,5.37 23.40,0.36Z" fill="url(#gg)"/><path d="M23.40,0.36 C23.40,-5.01 20.12,-8.23 10.76,-8.95 L-7.02,-8.95 C-17.78,-8.59 -23.40,-6.80 -23.40,-2.86 C-23.40,0.36 -21.06,1.79 -17.78,2.33 C-14.04,3.04 -14.04,7.88 -6.55,8.95 L10.76,8.95 C20.12,8.23 23.40,5.37 23.40,0.36Z" fill="url(#gh)"/></g>
<g transform="translate(165.5,250) rotate(4)"><path d="M-18.90,0.35 C-18.90,-4.87 -16.25,-8.00 -8.69,-8.70 L5.67,-8.70 C14.36,-8.35 18.90,-6.61 18.90,-2.78 C18.90,0.35 17.01,1.74 14.36,2.26 C11.34,2.96 11.34,7.66 5.29,8.70 L-8.69,8.70 C-16.25,8.00 -18.90,5.22 -18.90,0.35Z" fill="url(#gg)"/><path d="M-18.90,0.35 C-18.90,-4.87 -16.25,-8.00 -8.69,-8.70 L5.67,-8.70 C14.36,-8.35 18.90,-6.61 18.90,-2.78 C18.90,0.35 17.01,1.74 14.36,2.26 C11.34,2.96 11.34,7.66 5.29,8.70 L-8.69,8.70 C-16.25,8.00 -18.90,5.22 -18.90,0.35Z" fill="url(#gh)"/></g>
<g transform="translate(178,268.9) rotate(12.7)"><path d="M11.75,-0.27 C11.75,3.75 10.11,6.16 5.41,6.70 L-3.52,6.70 C-8.93,6.43 -11.75,5.09 -11.75,2.14 C-11.75,-0.27 -10.58,-1.34 -8.93,-1.74 C-7.05,-2.28 -7.05,-5.90 -3.29,-6.70 L5.41,-6.70 C10.11,-6.16 11.75,-4.02 11.75,-0.27Z" fill="url(#gg)"/><path d="M11.75,-0.27 C11.75,3.75 10.11,6.16 5.41,6.70 L-3.52,6.70 C-8.93,6.43 -11.75,5.09 -11.75,2.14 C-11.75,-0.27 -10.58,-1.34 -8.93,-1.74 C-7.05,-2.28 -7.05,-5.90 -3.29,-6.70 L5.41,-6.70 C10.11,-6.16 11.75,-4.02 11.75,-0.27Z" fill="url(#gh)"/></g>
<g transform="translate(195,231) rotate(0)"><path d="M-25.90,0.38 C-25.90,-5.38 -22.27,-8.83 -11.91,-9.60 L7.77,-9.60 C19.68,-9.22 25.90,-7.30 25.90,-3.07 C25.90,0.38 23.31,1.92 19.68,2.50 C15.54,3.26 15.54,8.45 7.25,9.60 L-11.91,9.60 C-22.27,8.83 -25.90,5.76 -25.90,0.38Z" fill="url(#gg)"/><path d="M-25.90,0.38 C-25.90,-5.38 -22.27,-8.83 -11.91,-9.60 L7.77,-9.60 C19.68,-9.22 25.90,-7.30 25.90,-3.07 C25.90,0.38 23.31,1.92 19.68,2.50 C15.54,3.26 15.54,8.45 7.25,9.60 L-11.91,9.60 C-22.27,8.83 -25.90,5.76 -25.90,0.38Z" fill="url(#gh)"/></g>
<g transform="translate(196.7,285.2) rotate(-21.8)"><path d="M26.30,0.40 C26.30,-5.57 22.62,-9.15 12.10,-9.95 L-7.89,-9.95 C-19.99,-9.55 -26.30,-7.56 -26.30,-3.18 C-26.30,0.40 -23.67,1.99 -19.99,2.59 C-15.78,3.38 -15.78,8.76 -7.36,9.95 L12.10,9.95 C22.62,9.15 26.30,5.97 26.30,0.40Z" fill="url(#gg)"/><path d="M26.30,0.40 C26.30,-5.57 22.62,-9.15 12.10,-9.95 L-7.89,-9.95 C-19.99,-9.55 -26.30,-7.56 -26.30,-3.18 C-26.30,0.40 -23.67,1.99 -19.99,2.59 C-15.78,3.38 -15.78,8.76 -7.36,9.95 L12.10,9.95 C22.62,9.15 26.30,5.97 26.30,0.40Z" fill="url(#gh)"/></g>
<g transform="translate(207.4,336.8) rotate(64)"><path d="M-19.40,-0.37 C-19.40,5.15 -16.68,8.46 -8.92,9.20 L5.82,9.20 C14.74,8.83 19.40,6.99 19.40,2.94 C19.40,-0.37 17.46,-1.84 14.74,-2.39 C11.64,-3.13 11.64,-8.10 5.43,-9.20 L-8.92,-9.20 C-16.68,-8.46 -19.40,-5.52 -19.40,-0.37Z" fill="url(#gg)"/><path d="M-19.40,-0.37 C-19.40,5.15 -16.68,8.46 -8.92,9.20 L5.82,9.20 C14.74,8.83 19.40,6.99 19.40,2.94 C19.40,-0.37 17.46,-1.84 14.74,-2.39 C11.64,-3.13 11.64,-8.10 5.43,-9.20 L-8.92,-9.20 C-16.68,-8.46 -19.40,-5.52 -19.40,-0.37Z" fill="url(#gh)"/></g>
<g transform="translate(411,233) rotate(0)"><path d="M22.40,0.34 C22.40,-4.79 19.26,-7.87 10.30,-8.55 L-6.72,-8.55 C-17.02,-8.21 -22.40,-6.50 -22.40,-2.74 C-22.40,0.34 -20.16,1.71 -17.02,2.22 C-13.44,2.91 -13.44,7.52 -6.27,8.55 L10.30,8.55 C19.26,7.87 22.40,5.13 22.40,0.34Z" fill="url(#gg)"/><path d="M22.40,0.34 C22.40,-4.79 19.26,-7.87 10.30,-8.55 L-6.72,-8.55 C-17.02,-8.21 -22.40,-6.50 -22.40,-2.74 C-22.40,0.34 -20.16,1.71 -17.02,2.22 C-13.44,2.91 -13.44,7.52 -6.27,8.55 L10.30,8.55 C19.26,7.87 22.40,5.13 22.40,0.34Z" fill="url(#gh)"/></g>
<g transform="translate(441.8,224.7) rotate(64)"><path d="M-13.90,0.28 C-13.90,-3.92 -11.95,-6.44 -6.39,-7.00 L4.17,-7.00 C10.56,-6.72 13.90,-5.32 13.90,-2.24 C13.90,0.28 12.51,1.40 10.56,1.82 C8.34,2.38 8.34,6.16 3.89,7.00 L-6.39,7.00 C-11.95,6.44 -13.90,4.20 -13.90,0.28Z" fill="url(#gg)"/><path d="M-13.90,0.28 C-13.90,-3.92 -11.95,-6.44 -6.39,-7.00 L4.17,-7.00 C10.56,-6.72 13.90,-5.32 13.90,-2.24 C13.90,0.28 12.51,1.40 10.56,1.82 C8.34,2.38 8.34,6.16 3.89,7.00 L-6.39,7.00 C-11.95,6.44 -13.90,4.20 -13.90,0.28Z" fill="url(#gh)"/></g>
<g transform="translate(375.5,239) rotate(-17)"><path d="M10.40,-0.41 C10.40,5.71 8.94,9.38 4.78,10.20 L-3.12,10.20 C-7.90,9.79 -10.40,7.75 -10.40,3.26 C-10.40,-0.41 -9.36,-2.04 -7.90,-2.65 C-6.24,-3.47 -6.24,-8.98 -2.91,-10.20 L4.78,-10.20 C8.94,-9.38 10.40,-6.12 10.40,-0.41Z" fill="url(#gg)"/><path d="M10.40,-0.41 C10.40,5.71 8.94,9.38 4.78,10.20 L-3.12,10.20 C-7.90,9.79 -10.40,7.75 -10.40,3.26 C-10.40,-0.41 -9.36,-2.04 -7.90,-2.65 C-6.24,-3.47 -6.24,-8.98 -2.91,-10.20 L4.78,-10.20 C8.94,-9.38 10.40,-6.12 10.40,-0.41Z" fill="url(#gh)"/></g>
<g transform="translate(241,264) rotate(-50)"><path d="M-25.40,0.37 C-25.40,-5.15 -21.84,-8.46 -11.68,-9.20 L7.62,-9.20 C19.30,-8.83 25.40,-6.99 25.40,-2.94 C25.40,0.37 22.86,1.84 19.30,2.39 C15.24,3.13 15.24,8.10 7.11,9.20 L-11.68,9.20 C-21.84,8.46 -25.40,5.52 -25.40,0.37Z" fill="url(#gg)"/><path d="M-25.40,0.37 C-25.40,-5.15 -21.84,-8.46 -11.68,-9.20 L7.62,-9.20 C19.30,-8.83 25.40,-6.99 25.40,-2.94 C25.40,0.37 22.86,1.84 19.30,2.39 C15.24,3.13 15.24,8.10 7.11,9.20 L-11.68,9.20 C-21.84,8.46 -25.40,5.52 -25.40,0.37Z" fill="url(#gh)"/></g>
<g transform="translate(310.6,261.8) rotate(-9.2)"><path d="M26.90,0.37 C26.90,-5.15 23.13,-8.46 12.37,-9.20 L-8.07,-9.20 C-20.44,-8.83 -26.90,-6.99 -26.90,-2.94 C-26.90,0.37 -24.21,1.84 -20.44,2.39 C-16.14,3.13 -16.14,8.10 -7.53,9.20 L12.37,9.20 C23.13,8.46 26.90,5.52 26.90,0.37Z" fill="url(#gg)"/><path d="M26.90,0.37 C26.90,-5.15 23.13,-8.46 12.37,-9.20 L-8.07,-9.20 C-20.44,-8.83 -26.90,-6.99 -26.90,-2.94 C-26.90,0.37 -24.21,1.84 -20.44,2.39 C-16.14,3.13 -16.14,8.10 -7.53,9.20 L12.37,9.20 C23.13,8.46 26.90,5.52 26.90,0.37Z" fill="url(#gh)"/></g>
<g transform="translate(285.9,283.2) rotate(2)"><path d="M-26.70,-0.37 C-26.70,5.15 -22.96,8.46 -12.28,9.20 L8.01,9.20 C20.29,8.83 26.70,6.99 26.70,2.94 C26.70,-0.37 24.03,-1.84 20.29,-2.39 C16.02,-3.13 16.02,-8.10 7.48,-9.20 L-12.28,-9.20 C-22.96,-8.46 -26.70,-5.52 -26.70,-0.37Z" fill="url(#gg)"/><path d="M-26.70,-0.37 C-26.70,5.15 -22.96,8.46 -12.28,9.20 L8.01,9.20 C20.29,8.83 26.70,6.99 26.70,2.94 C26.70,-0.37 24.03,-1.84 20.29,-2.39 C16.02,-3.13 16.02,-8.10 7.48,-9.20 L-12.28,-9.20 C-22.96,-8.46 -26.70,-5.52 -26.70,-0.37Z" fill="url(#gh)"/></g>
<g transform="translate(347,257.7) rotate(-56)"><path d="M23.30,0.36 C23.30,-5.01 20.04,-8.23 10.72,-8.95 L-6.99,-8.95 C-17.71,-8.59 -23.30,-6.80 -23.30,-2.86 C-23.30,0.36 -20.97,1.79 -17.71,2.33 C-13.98,3.04 -13.98,7.88 -6.52,8.95 L10.72,8.95 C20.04,8.23 23.30,5.37 23.30,0.36Z" fill="url(#gg)"/><path d="M23.30,0.36 C23.30,-5.01 20.04,-8.23 10.72,-8.95 L-6.99,-8.95 C-17.71,-8.59 -23.30,-6.80 -23.30,-2.86 C-23.30,0.36 -20.97,1.79 -17.71,2.33 C-13.98,3.04 -13.98,7.88 -6.52,8.95 L10.72,8.95 C20.04,8.23 23.30,5.37 23.30,0.36Z" fill="url(#gh)"/></g>
<g transform="translate(380.2,261.8) rotate(-25.3)"><path d="M-27.70,0.39 C-27.70,-5.43 -23.82,-8.92 -12.74,-9.70 L8.31,-9.70 C21.05,-9.31 27.70,-7.37 27.70,-3.10 C27.70,0.39 24.93,1.94 21.05,2.52 C16.62,3.30 16.62,8.54 7.76,9.70 L-12.74,9.70 C-23.82,8.92 -27.70,5.82 -27.70,0.39Z" fill="url(#gg)"/><path d="M-27.70,0.39 C-27.70,-5.43 -23.82,-8.92 -12.74,-9.70 L8.31,-9.70 C21.05,-9.31 27.70,-7.37 27.70,-3.10 C27.70,0.39 24.93,1.94 21.05,2.52 C16.62,3.30 16.62,8.54 7.76,9.70 L-12.74,9.70 C-23.82,8.92 -27.70,5.82 -27.70,0.39Z" fill="url(#gh)"/></g>
<g transform="translate(363,287) rotate(4)"><path d="M26.70,-0.40 C26.70,5.66 22.96,9.29 12.28,10.10 L-8.01,10.10 C-20.29,9.70 -26.70,7.68 -26.70,3.23 C-26.70,-0.40 -24.03,-2.02 -20.29,-2.63 C-16.02,-3.43 -16.02,-8.89 -7.48,-10.10 L12.28,-10.10 C22.96,-9.29 26.70,-6.06 26.70,-0.40Z" fill="url(#gg)"/><path d="M26.70,-0.40 C26.70,5.66 22.96,9.29 12.28,10.10 L-8.01,10.10 C-20.29,9.70 -26.70,7.68 -26.70,3.23 C-26.70,-0.40 -24.03,-2.02 -20.29,-2.63 C-16.02,-3.43 -16.02,-8.89 -7.48,-10.10 L12.28,-10.10 C22.96,-9.29 26.70,-6.06 26.70,-0.40Z" fill="url(#gh)"/></g>
<g transform="translate(404,269.6) rotate(-54)"><path d="M-25.90,0.32 C-25.90,-4.51 -22.27,-7.41 -11.91,-8.05 L7.77,-8.05 C19.68,-7.73 25.90,-6.12 25.90,-2.58 C25.90,0.32 23.31,1.61 19.68,2.09 C15.54,2.74 15.54,7.08 7.25,8.05 L-11.91,8.05 C-22.27,7.41 -25.90,4.83 -25.90,0.32Z" fill="url(#gg)"/><path d="M-25.90,0.32 C-25.90,-4.51 -22.27,-7.41 -11.91,-8.05 L7.77,-8.05 C19.68,-7.73 25.90,-6.12 25.90,-2.58 C25.90,0.32 23.31,1.61 19.68,2.09 C15.54,2.74 15.54,7.08 7.25,8.05 L-11.91,8.05 C-22.27,7.41 -25.90,4.83 -25.90,0.32Z" fill="url(#gh)"/></g>
<g transform="translate(415.3,302) rotate(-59)"><path d="M24.40,0.33 C24.40,-4.59 20.98,-7.54 11.22,-8.20 L-7.32,-8.20 C-18.54,-7.87 -24.40,-6.23 -24.40,-2.62 C-24.40,0.33 -21.96,1.64 -18.54,2.13 C-14.64,2.79 -14.64,7.22 -6.83,8.20 L11.22,8.20 C20.98,7.54 24.40,4.92 24.40,0.33Z" fill="url(#gg)"/><path d="M24.40,0.33 C24.40,-4.59 20.98,-7.54 11.22,-8.20 L-7.32,-8.20 C-18.54,-7.87 -24.40,-6.23 -24.40,-2.62 C-24.40,0.33 -21.96,1.64 -18.54,2.13 C-14.64,2.79 -14.64,7.22 -6.83,8.20 L11.22,8.20 C20.98,7.54 24.40,4.92 24.40,0.33Z" fill="url(#gh)"/></g>
<g transform="translate(448.3,280) rotate(-76)"><path d="M-26.40,-0.37 C-26.40,5.15 -22.70,8.46 -12.14,9.20 L7.92,9.20 C20.06,8.83 26.40,6.99 26.40,2.94 C26.40,-0.37 23.76,-1.84 20.06,-2.39 C15.84,-3.13 15.84,-8.10 7.39,-9.20 L-12.14,-9.20 C-22.70,-8.46 -26.40,-5.52 -26.40,-0.37Z" fill="url(#gg)"/><path d="M-26.40,-0.37 C-26.40,5.15 -22.70,8.46 -12.14,9.20 L7.92,9.20 C20.06,8.83 26.40,6.99 26.40,2.94 C26.40,-0.37 23.76,-1.84 20.06,-2.39 C15.84,-3.13 15.84,-8.10 7.39,-9.20 L-12.14,-9.20 C-22.70,-8.46 -26.40,-5.52 -26.40,-0.37Z" fill="url(#gh)"/></g>
<g transform="translate(463.5,242) rotate(-31.6)"><path d="M24.90,0.34 C24.90,-4.73 21.41,-7.77 11.45,-8.45 L-7.47,-8.45 C-18.92,-8.11 -24.90,-6.42 -24.90,-2.70 C-24.90,0.34 -22.41,1.69 -18.92,2.20 C-14.94,2.87 -14.94,7.44 -6.97,8.45 L11.45,8.45 C21.41,7.77 24.90,5.07 24.90,0.34Z" fill="url(#gg)"/><path d="M24.90,0.34 C24.90,-4.73 21.41,-7.77 11.45,-8.45 L-7.47,-8.45 C-18.92,-8.11 -24.90,-6.42 -24.90,-2.70 C-24.90,0.34 -22.41,1.69 -18.92,2.20 C-14.94,2.87 -14.94,7.44 -6.97,8.45 L11.45,8.45 C21.41,7.77 24.90,5.07 24.90,0.34Z" fill="url(#gh)"/></g>
<g transform="translate(450,311) rotate(-25)"><path d="M-14.40,0.33 C-14.40,-4.59 -12.38,-7.54 -6.62,-8.20 L4.32,-8.20 C10.94,-7.87 14.40,-6.23 14.40,-2.62 C14.40,0.33 12.96,1.64 10.94,2.13 C8.64,2.79 8.64,7.22 4.03,8.20 L-6.62,8.20 C-12.38,7.54 -14.40,4.92 -14.40,0.33Z" fill="url(#gg)"/><path d="M-14.40,0.33 C-14.40,-4.59 -12.38,-7.54 -6.62,-8.20 L4.32,-8.20 C10.94,-7.87 14.40,-6.23 14.40,-2.62 C14.40,0.33 12.96,1.64 10.94,2.13 C8.64,2.79 8.64,7.22 4.03,8.20 L-6.62,8.20 C-12.38,7.54 -14.40,4.92 -14.40,0.33Z" fill="url(#gh)"/></g>
<g transform="translate(247.7,308) rotate(31)"><path d="M24.90,-0.39 C24.90,5.43 21.41,8.92 11.45,9.70 L-7.47,9.70 C-18.92,9.31 -24.90,7.37 -24.90,3.10 C-24.90,-0.39 -22.41,-1.94 -18.92,-2.52 C-14.94,-3.30 -14.94,-8.54 -6.97,-9.70 L11.45,-9.70 C21.41,-8.92 24.90,-5.82 24.90,-0.39Z" fill="url(#gg)"/><path d="M24.90,-0.39 C24.90,5.43 21.41,8.92 11.45,9.70 L-7.47,9.70 C-18.92,9.31 -24.90,7.37 -24.90,3.10 C-24.90,-0.39 -22.41,-1.94 -18.92,-2.52 C-14.94,-3.30 -14.94,-8.54 -6.97,-9.70 L11.45,-9.70 C21.41,-8.92 24.90,-5.82 24.90,-0.39Z" fill="url(#gh)"/></g>
<g transform="translate(315,309.5) rotate(24.6)"><path d="M-26.90,0.37 C-26.90,-5.15 -23.13,-8.46 -12.37,-9.20 L8.07,-9.20 C20.44,-8.83 26.90,-6.99 26.90,-2.94 C26.90,0.37 24.21,1.84 20.44,2.39 C16.14,3.13 16.14,8.10 7.53,9.20 L-12.37,9.20 C-23.13,8.46 -26.90,5.52 -26.90,0.37Z" fill="url(#gg)"/><path d="M-26.90,0.37 C-26.90,-5.15 -23.13,-8.46 -12.37,-9.20 L8.07,-9.20 C20.44,-8.83 26.90,-6.99 26.90,-2.94 C26.90,0.37 24.21,1.84 20.44,2.39 C16.14,3.13 16.14,8.10 7.53,9.20 L-12.37,9.20 C-23.13,8.46 -26.90,5.52 -26.90,0.37Z" fill="url(#gh)"/></g>
<g transform="translate(291.9,325.9) rotate(40)"><path d="M25.25,0.30 C25.25,-4.14 21.71,-6.81 11.62,-7.40 L-7.57,-7.40 C-19.19,-7.10 -25.25,-5.62 -25.25,-2.37 C-25.25,0.30 -22.73,1.48 -19.19,1.92 C-15.15,2.52 -15.15,6.51 -7.07,7.40 L11.62,7.40 C21.71,6.81 25.25,4.44 25.25,0.30Z" fill="url(#gg)"/><path d="M25.25,0.30 C25.25,-4.14 21.71,-6.81 11.62,-7.40 L-7.57,-7.40 C-19.19,-7.10 -25.25,-5.62 -25.25,-2.37 C-25.25,0.30 -22.73,1.48 -19.19,1.92 C-15.15,2.52 -15.15,6.51 -7.07,7.40 L11.62,7.40 C21.71,6.81 25.25,4.44 25.25,0.30Z" fill="url(#gh)"/></g>
<g transform="translate(241.5,330.5) rotate(37)"><path d="M-24.40,-0.39 C-24.40,5.43 -20.98,8.92 -11.22,9.70 L7.32,9.70 C18.54,9.31 24.40,7.37 24.40,3.10 C24.40,-0.39 21.96,-1.94 18.54,-2.52 C14.64,-3.30 14.64,-8.54 6.83,-9.70 L-11.22,-9.70 C-20.98,-8.92 -24.40,-5.82 -24.40,-0.39Z" fill="url(#gg)"/><path d="M-24.40,-0.39 C-24.40,5.43 -20.98,8.92 -11.22,9.70 L7.32,9.70 C18.54,9.31 24.40,7.37 24.40,3.10 C24.40,-0.39 21.96,-1.94 18.54,-2.52 C14.64,-3.30 14.64,-8.54 6.83,-9.70 L-11.22,-9.70 C-20.98,-8.92 -24.40,-5.82 -24.40,-0.39Z" fill="url(#gh)"/></g>
<g transform="translate(555.6,225.2) rotate(19.2)"><path d="M26.20,0.36 C26.20,-5.10 22.53,-8.37 12.05,-9.10 L-7.86,-9.10 C-19.91,-8.74 -26.20,-6.92 -26.20,-2.91 C-26.20,0.36 -23.58,1.82 -19.91,2.37 C-15.72,3.09 -15.72,8.01 -7.34,9.10 L12.05,9.10 C22.53,8.37 26.20,5.46 26.20,0.36Z" fill="url(#gg)"/><path d="M26.20,0.36 C26.20,-5.10 22.53,-8.37 12.05,-9.10 L-7.86,-9.10 C-19.91,-8.74 -26.20,-6.92 -26.20,-2.91 C-26.20,0.36 -23.58,1.82 -19.91,2.37 C-15.72,3.09 -15.72,8.01 -7.34,9.10 L12.05,9.10 C22.53,8.37 26.20,5.46 26.20,0.36Z" fill="url(#gh)"/></g>
<g transform="translate(549.7,255.9) rotate(-20.7)"><path d="M-27.70,0.38 C-27.70,-5.38 -23.82,-8.83 -12.74,-9.60 L8.31,-9.60 C21.05,-9.22 27.70,-7.30 27.70,-3.07 C27.70,0.38 24.93,1.92 21.05,2.50 C16.62,3.26 16.62,8.45 7.76,9.60 L-12.74,9.60 C-23.82,8.83 -27.70,5.76 -27.70,0.38Z" fill="url(#gg)"/><path d="M-27.70,0.38 C-27.70,-5.38 -23.82,-8.83 -12.74,-9.60 L8.31,-9.60 C21.05,-9.22 27.70,-7.30 27.70,-3.07 C27.70,0.38 24.93,1.92 21.05,2.50 C16.62,3.26 16.62,8.45 7.76,9.60 L-12.74,9.60 C-23.82,8.83 -27.70,5.76 -27.70,0.38Z" fill="url(#gh)"/></g>
<g transform="translate(597.7,236.4) rotate(75.5)"><path d="M24.75,-0.38 C24.75,5.38 21.29,8.83 11.38,9.60 L-7.42,9.60 C-18.81,9.22 -24.75,7.30 -24.75,3.07 C-24.75,-0.38 -22.28,-1.92 -18.81,-2.50 C-14.85,-3.26 -14.85,-8.45 -6.93,-9.60 L11.38,-9.60 C21.29,-8.83 24.75,-5.76 24.75,-0.38Z" fill="url(#gg)"/><path d="M24.75,-0.38 C24.75,5.38 21.29,8.83 11.38,9.60 L-7.42,9.60 C-18.81,9.22 -24.75,7.30 -24.75,3.07 C-24.75,-0.38 -22.28,-1.92 -18.81,-2.50 C-14.85,-3.26 -14.85,-8.45 -6.93,-9.60 L11.38,-9.60 C21.29,-8.83 24.75,-5.76 24.75,-0.38Z" fill="url(#gh)"/></g>
<g transform="translate(567.8,272.8) rotate(-6)"><path d="M-21.90,0.34 C-21.90,-4.70 -18.83,-7.73 -10.07,-8.40 L6.57,-8.40 C16.64,-8.06 21.90,-6.38 21.90,-2.69 C21.90,0.34 19.71,1.68 16.64,2.18 C13.14,2.86 13.14,7.39 6.13,8.40 L-10.07,8.40 C-18.83,7.73 -21.90,5.04 -21.90,0.34Z" fill="url(#gg)"/><path d="M-21.90,0.34 C-21.90,-4.70 -18.83,-7.73 -10.07,-8.40 L6.57,-8.40 C16.64,-8.06 21.90,-6.38 21.90,-2.69 C21.90,0.34 19.71,1.68 16.64,2.18 C13.14,2.86 13.14,7.39 6.13,8.40 L-10.07,8.40 C-18.83,7.73 -21.90,5.04 -21.90,0.34Z" fill="url(#gh)"/></g>
<g transform="translate(607,287) rotate(90)"><path d="M26.30,0.39 C26.30,-5.52 22.62,-9.06 12.10,-9.85 L-7.89,-9.85 C-19.99,-9.46 -26.30,-7.49 -26.30,-3.15 C-26.30,0.39 -23.67,1.97 -19.99,2.56 C-15.78,3.35 -15.78,8.67 -7.36,9.85 L12.10,9.85 C22.62,9.06 26.30,5.91 26.30,0.39Z" fill="url(#gg)"/><path d="M26.30,0.39 C26.30,-5.52 22.62,-9.06 12.10,-9.85 L-7.89,-9.85 C-19.99,-9.46 -26.30,-7.49 -26.30,-3.15 C-26.30,0.39 -23.67,1.97 -19.99,2.56 C-15.78,3.35 -15.78,8.67 -7.36,9.85 L12.10,9.85 C22.62,9.06 26.30,5.91 26.30,0.39Z" fill="url(#gh)"/></g>
<g transform="translate(515,290.4) rotate(11.6)"><path d="M-27.25,-0.37 C-27.25,5.24 -23.43,8.60 -12.54,9.35 L8.17,9.35 C20.71,8.98 27.25,7.11 27.25,2.99 C27.25,-0.37 24.53,-1.87 20.71,-2.43 C16.35,-3.18 16.35,-8.23 7.63,-9.35 L-12.54,-9.35 C-23.43,-8.60 -27.25,-5.61 -27.25,-0.37Z" fill="url(#gg)"/><path d="M-27.25,-0.37 C-27.25,5.24 -23.43,8.60 -12.54,9.35 L8.17,9.35 C20.71,8.98 27.25,7.11 27.25,2.99 C27.25,-0.37 24.53,-1.87 20.71,-2.43 C16.35,-3.18 16.35,-8.23 7.63,-9.35 L-12.54,-9.35 C-23.43,-8.60 -27.25,-5.61 -27.25,-0.37Z" fill="url(#gh)"/></g>
<g transform="translate(474.3,322) rotate(-47)"><path d="M25.90,0.39 C25.90,-5.43 22.27,-8.92 11.91,-9.70 L-7.77,-9.70 C-19.68,-9.31 -25.90,-7.37 -25.90,-3.10 C-25.90,0.39 -23.31,1.94 -19.68,2.52 C-15.54,3.30 -15.54,8.54 -7.25,9.70 L11.91,9.70 C22.27,8.92 25.90,5.82 25.90,0.39Z" fill="url(#gg)"/><path d="M25.90,0.39 C25.90,-5.43 22.27,-8.92 11.91,-9.70 L-7.77,-9.70 C-19.68,-9.31 -25.90,-7.37 -25.90,-3.10 C-25.90,0.39 -23.31,1.94 -19.68,2.52 C-15.54,3.30 -15.54,8.54 -7.25,9.70 L11.91,9.70 C22.27,8.92 25.90,5.82 25.90,0.39Z" fill="url(#gh)"/></g>
<g transform="translate(694,277) rotate(-10)"><path d="M-14.40,0.41 C-14.40,-5.71 -12.38,-9.38 -6.62,-10.20 L4.32,-10.20 C10.94,-9.79 14.40,-7.75 14.40,-3.26 C14.40,0.41 12.96,2.04 10.94,2.65 C8.64,3.47 8.64,8.98 4.03,10.20 L-6.62,10.20 C-12.38,9.38 -14.40,6.12 -14.40,0.41Z" fill="url(#gg)"/><path d="M-14.40,0.41 C-14.40,-5.71 -12.38,-9.38 -6.62,-10.20 L4.32,-10.20 C10.94,-9.79 14.40,-7.75 14.40,-3.26 C14.40,0.41 12.96,2.04 10.94,2.65 C8.64,3.47 8.64,8.98 4.03,10.20 L-6.62,10.20 C-12.38,9.38 -14.40,6.12 -14.40,0.41Z" fill="url(#gh)"/></g>
<g transform="translate(672.6,320) rotate(-27)"><path d="M25.40,-0.37 C25.40,5.15 21.84,8.46 11.68,9.20 L-7.62,9.20 C-19.30,8.83 -25.40,6.99 -25.40,2.94 C-25.40,-0.37 -22.86,-1.84 -19.30,-2.39 C-15.24,-3.13 -15.24,-8.10 -7.11,-9.20 L11.68,-9.20 C21.84,-8.46 25.40,-5.52 25.40,-0.37Z" fill="url(#gg)"/><path d="M25.40,-0.37 C25.40,5.15 21.84,8.46 11.68,9.20 L-7.62,9.20 C-19.30,8.83 -25.40,6.99 -25.40,2.94 C-25.40,-0.37 -22.86,-1.84 -19.30,-2.39 C-15.24,-3.13 -15.24,-8.10 -7.11,-9.20 L11.68,-9.20 C21.84,-8.46 25.40,-5.52 25.40,-0.37Z" fill="url(#gh)"/></g>
<g transform="translate(37.2,379.6) rotate(0)"><path d="M-25.65,0.38 C-25.65,-5.38 -22.06,-8.83 -11.80,-9.60 L7.69,-9.60 C19.49,-9.22 25.65,-7.30 25.65,-3.07 C25.65,0.38 23.09,1.92 19.49,2.50 C15.39,3.26 15.39,8.45 7.18,9.60 L-11.80,9.60 C-22.06,8.83 -25.65,5.76 -25.65,0.38Z" fill="url(#gg)"/><path d="M-25.65,0.38 C-25.65,-5.38 -22.06,-8.83 -11.80,-9.60 L7.69,-9.60 C19.49,-9.22 25.65,-7.30 25.65,-3.07 C25.65,0.38 23.09,1.92 19.49,2.50 C15.39,3.26 15.39,8.45 7.18,9.60 L-11.80,9.60 C-22.06,8.83 -25.65,5.76 -25.65,0.38Z" fill="url(#gh)"/></g>
<g transform="translate(17.9,350.3) rotate(-57.6)"><path d="M27.90,0.37 C27.90,-5.15 23.99,-8.46 12.83,-9.20 L-8.37,-9.20 C-21.20,-8.83 -27.90,-6.99 -27.90,-2.94 C-27.90,0.37 -25.11,1.84 -21.20,2.39 C-16.74,3.13 -16.74,8.10 -7.81,9.20 L12.83,9.20 C23.99,8.46 27.90,5.52 27.90,0.37Z" fill="url(#gg)"/><path d="M27.90,0.37 C27.90,-5.15 23.99,-8.46 12.83,-9.20 L-8.37,-9.20 C-21.20,-8.83 -27.90,-6.99 -27.90,-2.94 C-27.90,0.37 -25.11,1.84 -21.20,2.39 C-16.74,3.13 -16.74,8.10 -7.81,9.20 L12.83,9.20 C23.99,8.46 27.90,5.52 27.90,0.37Z" fill="url(#gh)"/></g>
<g transform="translate(83.7,375.7) rotate(32.3)"><path d="M-27.40,-0.38 C-27.40,5.29 -23.56,8.69 -12.60,9.45 L8.22,9.45 C20.82,9.07 27.40,7.18 27.40,3.02 C27.40,-0.38 24.66,-1.89 20.82,-2.46 C16.44,-3.21 16.44,-8.32 7.67,-9.45 L-12.60,-9.45 C-23.56,-8.69 -27.40,-5.67 -27.40,-0.38Z" fill="url(#gg)"/><path d="M-27.40,-0.38 C-27.40,5.29 -23.56,8.69 -12.60,9.45 L8.22,9.45 C20.82,9.07 27.40,7.18 27.40,3.02 C27.40,-0.38 24.66,-1.89 20.82,-2.46 C16.44,-3.21 16.44,-8.32 7.67,-9.45 L-12.60,-9.45 C-23.56,-8.69 -27.40,-5.67 -27.40,-0.38Z" fill="url(#gh)"/></g>
<g transform="translate(81,410) rotate(39.7)"><path d="M27.40,0.38 C27.40,-5.38 23.56,-8.83 12.60,-9.60 L-8.22,-9.60 C-20.82,-9.22 -27.40,-7.30 -27.40,-3.07 C-27.40,0.38 -24.66,1.92 -20.82,2.50 C-16.44,3.26 -16.44,8.45 -7.67,9.60 L12.60,9.60 C23.56,8.83 27.40,5.76 27.40,0.38Z" fill="url(#gg)"/><path d="M27.40,0.38 C27.40,-5.38 23.56,-8.83 12.60,-9.60 L-8.22,-9.60 C-20.82,-9.22 -27.40,-7.30 -27.40,-3.07 C-27.40,0.38 -24.66,1.92 -20.82,2.50 C-16.44,3.26 -16.44,8.45 -7.67,9.60 L12.60,9.60 C23.56,8.83 27.40,5.76 27.40,0.38Z" fill="url(#gh)"/></g>
<g transform="translate(42.1,419) rotate(45.6)"><path d="M-25.40,0.40 C-25.40,-5.66 -21.84,-9.29 -11.68,-10.10 L7.62,-10.10 C19.30,-9.70 25.40,-7.68 25.40,-3.23 C25.40,0.40 22.86,2.02 19.30,2.63 C15.24,3.43 15.24,8.89 7.11,10.10 L-11.68,10.10 C-21.84,9.29 -25.40,6.06 -25.40,0.40Z" fill="url(#gg)"/><path d="M-25.40,0.40 C-25.40,-5.66 -21.84,-9.29 -11.68,-10.10 L7.62,-10.10 C19.30,-9.70 25.40,-7.68 25.40,-3.23 C25.40,0.40 22.86,2.02 19.30,2.63 C15.24,3.43 15.24,8.89 7.11,10.10 L-11.68,10.10 C-21.84,9.29 -25.40,6.06 -25.40,0.40Z" fill="url(#gh)"/></g>
<g transform="translate(10.1,422) rotate(0)"><path d="M7.40,-0.29 C7.40,4.03 6.36,6.62 3.40,7.20 L-2.22,7.20 C-5.62,6.91 -7.40,5.47 -7.40,2.30 C-7.40,-0.29 -6.66,-1.44 -5.62,-1.87 C-4.44,-2.45 -4.44,-6.34 -2.07,-7.20 L3.40,-7.20 C6.36,-6.62 7.40,-4.32 7.40,-0.29Z" fill="url(#gg)"/><path d="M7.40,-0.29 C7.40,4.03 6.36,6.62 3.40,7.20 L-2.22,7.20 C-5.62,6.91 -7.40,5.47 -7.40,2.30 C-7.40,-0.29 -6.66,-1.44 -5.62,-1.87 C-4.44,-2.45 -4.44,-6.34 -2.07,-7.20 L3.40,-7.20 C6.36,-6.62 7.40,-4.32 7.40,-0.29Z" fill="url(#gh)"/></g>
<g transform="translate(26,436) rotate(-13)"><path d="M-16.70,0.34 C-16.70,-4.79 -14.36,-7.87 -7.68,-8.55 L5.01,-8.55 C12.69,-8.21 16.70,-6.50 16.70,-2.74 C16.70,0.34 15.03,1.71 12.69,2.22 C10.02,2.91 10.02,7.52 4.68,8.55 L-7.68,8.55 C-14.36,7.87 -16.70,5.13 -16.70,0.34Z" fill="url(#gg)"/><path d="M-16.70,0.34 C-16.70,-4.79 -14.36,-7.87 -7.68,-8.55 L5.01,-8.55 C12.69,-8.21 16.70,-6.50 16.70,-2.74 C16.70,0.34 15.03,1.71 12.69,2.22 C10.02,2.91 10.02,7.52 4.68,8.55 L-7.68,8.55 C-14.36,7.87 -16.70,5.13 -16.70,0.34Z" fill="url(#gh)"/></g>
<g transform="translate(27.3,457.3) rotate(-10)"><path d="M25.15,0.35 C25.15,-4.87 21.63,-8.00 11.57,-8.70 L-7.54,-8.70 C-19.11,-8.35 -25.15,-6.61 -25.15,-2.78 C-25.15,0.35 -22.63,1.74 -19.11,2.26 C-15.09,2.96 -15.09,7.66 -7.04,8.70 L11.57,8.70 C21.63,8.00 25.15,5.22 25.15,0.35Z" fill="url(#gg)"/><path d="M25.15,0.35 C25.15,-4.87 21.63,-8.00 11.57,-8.70 L-7.54,-8.70 C-19.11,-8.35 -25.15,-6.61 -25.15,-2.78 C-25.15,0.35 -22.63,1.74 -19.11,2.26 C-15.09,2.96 -15.09,7.66 -7.04,8.70 L11.57,8.70 C21.63,8.00 25.15,5.22 25.15,0.35Z" fill="url(#gh)"/></g>
<g transform="translate(92.3,445) rotate(-15.7)"><path d="M-25.75,-0.35 C-25.75,4.96 -22.14,8.14 -11.85,8.85 L7.72,8.85 C19.57,8.50 25.75,6.73 25.75,2.83 C25.75,-0.35 23.18,-1.77 19.57,-2.30 C15.45,-3.01 15.45,-7.79 7.21,-8.85 L-11.85,-8.85 C-22.14,-8.14 -25.75,-5.31 -25.75,-0.35Z" fill="url(#gg)"/><path d="M-25.75,-0.35 C-25.75,4.96 -22.14,8.14 -11.85,8.85 L7.72,8.85 C19.57,8.50 25.75,6.73 25.75,2.83 C25.75,-0.35 23.18,-1.77 19.57,-2.30 C15.45,-3.01 15.45,-7.79 7.21,-8.85 L-11.85,-8.85 C-22.14,-8.14 -25.75,-5.31 -25.75,-0.35Z" fill="url(#gh)"/></g>
<g transform="translate(136.4,430.8) rotate(27.5)"><path d="M26.90,0.40 C26.90,-5.54 23.13,-9.11 12.37,-9.90 L-8.07,-9.90 C-20.44,-9.50 -26.90,-7.52 -26.90,-3.17 C-26.90,0.40 -24.21,1.98 -20.44,2.57 C-16.14,3.37 -16.14,8.71 -7.53,9.90 L12.37,9.90 C23.13,9.11 26.90,5.94 26.90,0.40Z" fill="url(#gg)"/><path d="M26.90,0.40 C26.90,-5.54 23.13,-9.11 12.37,-9.90 L-8.07,-9.90 C-20.44,-9.50 -26.90,-7.52 -26.90,-3.17 C-26.90,0.40 -24.21,1.98 -20.44,2.57 C-16.14,3.37 -16.14,8.71 -7.53,9.90 L12.37,9.90 C23.13,9.11 26.90,5.94 26.90,0.40Z" fill="url(#gh)"/></g>
<g transform="translate(113,467) rotate(-73.5)"><path d="M-24.40,0.37 C-24.40,-5.15 -20.98,-8.46 -11.22,-9.20 L7.32,-9.20 C18.54,-8.83 24.40,-6.99 24.40,-2.94 C24.40,0.37 21.96,1.84 18.54,2.39 C14.64,3.13 14.64,8.10 6.83,9.20 L-11.22,9.20 C-20.98,8.46 -24.40,5.52 -24.40,0.37Z" fill="url(#gg)"/><path d="M-24.40,0.37 C-24.40,-5.15 -20.98,-8.46 -11.22,-9.20 L7.32,-9.20 C18.54,-8.83 24.40,-6.99 24.40,-2.94 C24.40,0.37 21.96,1.84 18.54,2.39 C14.64,3.13 14.64,8.10 6.83,9.20 L-11.22,9.20 C-20.98,8.46 -24.40,5.52 -24.40,0.37Z" fill="url(#gh)"/></g>
<g transform="translate(137.5,470) rotate(88)"><path d="M25.40,-0.37 C25.40,5.15 21.84,8.46 11.68,9.20 L-7.62,9.20 C-19.30,8.83 -25.40,6.99 -25.40,2.94 C-25.40,-0.37 -22.86,-1.84 -19.30,-2.39 C-15.24,-3.13 -15.24,-8.10 -7.11,-9.20 L11.68,-9.20 C21.84,-8.46 25.40,-5.52 25.40,-0.37Z" fill="url(#gg)"/><path d="M25.40,-0.37 C25.40,5.15 21.84,8.46 11.68,9.20 L-7.62,9.20 C-19.30,8.83 -25.40,6.99 -25.40,2.94 C-25.40,-0.37 -22.86,-1.84 -19.30,-2.39 C-15.24,-3.13 -15.24,-8.10 -7.11,-9.20 L11.68,-9.20 C21.84,-8.46 25.40,-5.52 25.40,-0.37Z" fill="url(#gh)"/></g>
<g transform="translate(79,483) rotate(83)"><path d="M-24.40,0.39 C-24.40,-5.43 -20.98,-8.92 -11.22,-9.70 L7.32,-9.70 C18.54,-9.31 24.40,-7.37 24.40,-3.10 C24.40,0.39 21.96,1.94 18.54,2.52 C14.64,3.30 14.64,8.54 6.83,9.70 L-11.22,9.70 C-20.98,8.92 -24.40,5.82 -24.40,0.39Z" fill="url(#gg)"/><path d="M-24.40,0.39 C-24.40,-5.43 -20.98,-8.92 -11.22,-9.70 L7.32,-9.70 C18.54,-9.31 24.40,-7.37 24.40,-3.10 C24.40,0.39 21.96,1.94 18.54,2.52 C14.64,3.30 14.64,8.54 6.83,9.70 L-11.22,9.70 C-20.98,8.92 -24.40,5.82 -24.40,0.39Z" fill="url(#gh)"/></g>
<g transform="translate(200,437.3) rotate(32.7)"><path d="M25.40,0.34 C25.40,-4.79 21.84,-7.87 11.68,-8.55 L-7.62,-8.55 C-19.30,-8.21 -25.40,-6.50 -25.40,-2.74 C-25.40,0.34 -22.86,1.71 -19.30,2.22 C-15.24,2.91 -15.24,7.52 -7.11,8.55 L11.68,8.55 C21.84,7.87 25.40,5.13 25.40,0.34Z" fill="url(#gg)"/><path d="M25.40,0.34 C25.40,-4.79 21.84,-7.87 11.68,-8.55 L-7.62,-8.55 C-19.30,-8.21 -25.40,-6.50 -25.40,-2.74 C-25.40,0.34 -22.86,1.71 -19.30,2.22 C-15.24,2.91 -15.24,7.52 -7.11,8.55 L11.68,8.55 C21.84,7.87 25.40,5.13 25.40,0.34Z" fill="url(#gh)"/></g>
<g transform="translate(224.2,425) rotate(24.2)"><path d="M-21.70,-0.39 C-21.70,5.43 -18.66,8.92 -9.98,9.70 L6.51,9.70 C16.49,9.31 21.70,7.37 21.70,3.10 C21.70,-0.39 19.53,-1.94 16.49,-2.52 C13.02,-3.30 13.02,-8.54 6.08,-9.70 L-9.98,-9.70 C-18.66,-8.92 -21.70,-5.82 -21.70,-0.39Z" fill="url(#gg)"/><path d="M-21.70,-0.39 C-21.70,5.43 -18.66,8.92 -9.98,9.70 L6.51,9.70 C16.49,9.31 21.70,7.37 21.70,3.10 C21.70,-0.39 19.53,-1.94 16.49,-2.52 C13.02,-3.30 13.02,-8.54 6.08,-9.70 L-9.98,-9.70 C-18.66,-8.92 -21.70,-5.82 -21.70,-0.39Z" fill="url(#gh)"/></g>
<g transform="translate(241.5,448.4) rotate(-26)"><path d="M25.40,0.34 C25.40,-4.73 21.84,-7.77 11.68,-8.45 L-7.62,-8.45 C-19.30,-8.11 -25.40,-6.42 -25.40,-2.70 C-25.40,0.34 -22.86,1.69 -19.30,2.20 C-15.24,2.87 -15.24,7.44 -7.11,8.45 L11.68,8.45 C21.84,7.77 25.40,5.07 25.40,0.34Z" fill="url(#gg)"/><path d="M25.40,0.34 C25.40,-4.73 21.84,-7.77 11.68,-8.45 L-7.62,-8.45 C-19.30,-8.11 -25.40,-6.42 -25.40,-2.70 C-25.40,0.34 -22.86,1.69 -19.30,2.20 C-15.24,2.87 -15.24,7.44 -7.11,8.45 L11.68,8.45 C21.84,7.77 25.40,5.07 25.40,0.34Z" fill="url(#gh)"/></g>
<g transform="translate(286.7,346.7) rotate(34.8)"><path d="M-26.30,0.37 C-26.30,-5.15 -22.62,-8.46 -12.10,-9.20 L7.89,-9.20 C19.99,-8.83 26.30,-6.99 26.30,-2.94 C26.30,0.37 23.67,1.84 19.99,2.39 C15.78,3.13 15.78,8.10 7.36,9.20 L-12.10,9.20 C-22.62,8.46 -26.30,5.52 -26.30,0.37Z" fill="url(#gg)"/><path d="M-26.30,0.37 C-26.30,-5.15 -22.62,-8.46 -12.10,-9.20 L7.89,-9.20 C19.99,-8.83 26.30,-6.99 26.30,-2.94 C26.30,0.37 23.67,1.84 19.99,2.39 C15.78,3.13 15.78,8.10 7.36,9.20 L-12.10,9.20 C-22.62,8.46 -26.30,5.52 -26.30,0.37Z" fill="url(#gh)"/></g>
<g transform="translate(327.5,345.4) rotate(56.2)"><path d="M23.00,-0.33 C23.00,4.68 19.78,7.68 10.58,8.35 L-6.90,8.35 C-17.48,8.02 -23.00,6.35 -23.00,2.67 C-23.00,-0.33 -20.70,-1.67 -17.48,-2.17 C-13.80,-2.84 -13.80,-7.35 -6.44,-8.35 L10.58,-8.35 C19.78,-7.68 23.00,-5.01 23.00,-0.33Z" fill="url(#gg)"/><path d="M23.00,-0.33 C23.00,4.68 19.78,7.68 10.58,8.35 L-6.90,8.35 C-17.48,8.02 -23.00,6.35 -23.00,2.67 C-23.00,-0.33 -20.70,-1.67 -17.48,-2.17 C-13.80,-2.84 -13.80,-7.35 -6.44,-8.35 L10.58,-8.35 C19.78,-7.68 23.00,-5.01 23.00,-0.33Z" fill="url(#gh)"/></g>
<g transform="translate(276.8,394.4) rotate(-58.6)"><path d="M-24.90,0.40 C-24.90,-5.60 -21.41,-9.20 -11.45,-10.00 L7.47,-10.00 C18.92,-9.60 24.90,-7.60 24.90,-3.20 C24.90,0.40 22.41,2.00 18.92,2.60 C14.94,3.40 14.94,8.80 6.97,10.00 L-11.45,10.00 C-21.41,9.20 -24.90,6.00 -24.90,0.40Z" fill="url(#gg)"/><path d="M-24.90,0.40 C-24.90,-5.60 -21.41,-9.20 -11.45,-10.00 L7.47,-10.00 C18.92,-9.60 24.90,-7.60 24.90,-3.20 C24.90,0.40 22.41,2.00 18.92,2.60 C14.94,3.40 14.94,8.80 6.97,10.00 L-11.45,10.00 C-21.41,9.20 -24.90,6.00 -24.90,0.40Z" fill="url(#gh)"/></g>
<g transform="translate(291.9,409.4) rotate(-54.6)"><path d="M26.90,0.36 C26.90,-5.10 23.13,-8.37 12.37,-9.10 L-8.07,-9.10 C-20.44,-8.74 -26.90,-6.92 -26.90,-2.91 C-26.90,0.36 -24.21,1.82 -20.44,2.37 C-16.14,3.09 -16.14,8.01 -7.53,9.10 L12.37,9.10 C23.13,8.37 26.90,5.46 26.90,0.36Z" fill="url(#gg)"/><path d="M26.90,0.36 C26.90,-5.10 23.13,-8.37 12.37,-9.10 L-8.07,-9.10 C-20.44,-8.74 -26.90,-6.92 -26.90,-2.91 C-26.90,0.36 -24.21,1.82 -20.44,2.37 C-16.14,3.09 -16.14,8.01 -7.53,9.10 L12.37,9.10 C23.13,8.37 26.90,5.46 26.90,0.36Z" fill="url(#gh)"/></g>
<g transform="translate(333.4,393) rotate(-60.3)"><path d="M-26.90,-0.41 C-26.90,5.71 -23.13,9.38 -12.37,10.20 L8.07,10.20 C20.44,9.79 26.90,7.75 26.90,3.26 C26.90,-0.41 24.21,-2.04 20.44,-2.65 C16.14,-3.47 16.14,-8.98 7.53,-10.20 L-12.37,-10.20 C-23.13,-9.38 -26.90,-6.12 -26.90,-0.41Z" fill="url(#gg)"/><path d="M-26.90,-0.41 C-26.90,5.71 -23.13,9.38 -12.37,10.20 L8.07,10.20 C20.44,9.79 26.90,7.75 26.90,3.26 C26.90,-0.41 24.21,-2.04 20.44,-2.65 C16.14,-3.47 16.14,-8.98 7.53,-10.20 L-12.37,-10.20 C-23.13,-9.38 -26.90,-6.12 -26.90,-0.41Z" fill="url(#gh)"/></g>
<g transform="translate(431.4,417.2) rotate(17.9)"><path d="M25.90,0.37 C25.90,-5.15 22.27,-8.46 11.91,-9.20 L-7.77,-9.20 C-19.68,-8.83 -25.90,-6.99 -25.90,-2.94 C-25.90,0.37 -23.31,1.84 -19.68,2.39 C-15.54,3.13 -15.54,8.10 -7.25,9.20 L11.91,9.20 C22.27,8.46 25.90,5.52 25.90,0.37Z" fill="url(#gg)"/><path d="M25.90,0.37 C25.90,-5.15 22.27,-8.46 11.91,-9.20 L-7.77,-9.20 C-19.68,-8.83 -25.90,-6.99 -25.90,-2.94 C-25.90,0.37 -23.31,1.84 -19.68,2.39 C-15.54,3.13 -15.54,8.10 -7.25,9.20 L11.91,9.20 C22.27,8.46 25.90,5.52 25.90,0.37Z" fill="url(#gh)"/></g>
<g transform="translate(415.3,433.4) rotate(34.5)"><path d="M-24.90,0.34 C-24.90,-4.79 -21.41,-7.87 -11.45,-8.55 L7.47,-8.55 C18.92,-8.21 24.90,-6.50 24.90,-2.74 C24.90,0.34 22.41,1.71 18.92,2.22 C14.94,2.91 14.94,7.52 6.97,8.55 L-11.45,8.55 C-21.41,7.87 -24.90,5.13 -24.90,0.34Z" fill="url(#gg)"/><path d="M-24.90,0.34 C-24.90,-4.79 -21.41,-7.87 -11.45,-8.55 L7.47,-8.55 C18.92,-8.21 24.90,-6.50 24.90,-2.74 C24.90,0.34 22.41,1.71 18.92,2.22 C14.94,2.91 14.94,7.52 6.97,8.55 L-11.45,8.55 C-21.41,7.87 -24.90,5.13 -24.90,0.34Z" fill="url(#gh)"/></g>
<g transform="translate(429.6,349.3) rotate(15)"><path d="M12.15,-0.41 C12.15,5.71 10.45,9.38 5.59,10.20 L-3.65,10.20 C-9.23,9.79 -12.15,7.75 -12.15,3.26 C-12.15,-0.41 -10.94,-2.04 -9.23,-2.65 C-7.29,-3.47 -7.29,-8.98 -3.40,-10.20 L5.59,-10.20 C10.45,-9.38 12.15,-6.12 12.15,-0.41Z" fill="url(#gg)"/><path d="M12.15,-0.41 C12.15,5.71 10.45,9.38 5.59,10.20 L-3.65,10.20 C-9.23,9.79 -12.15,7.75 -12.15,3.26 C-12.15,-0.41 -10.94,-2.04 -9.23,-2.65 C-7.29,-3.47 -7.29,-8.98 -3.40,-10.20 L5.59,-10.20 C10.45,-9.38 12.15,-6.12 12.15,-0.41Z" fill="url(#gh)"/></g>
<g transform="translate(463.25,367) rotate(-45)"><path d="M-27.05,0.38 C-27.05,-5.38 -23.26,-8.83 -12.44,-9.60 L8.11,-9.60 C20.56,-9.22 27.05,-7.30 27.05,-3.07 C27.05,0.38 24.34,1.92 20.56,2.50 C16.23,3.26 16.23,8.45 7.57,9.60 L-12.44,9.60 C-23.26,8.83 -27.05,5.76 -27.05,0.38Z" fill="url(#gg)"/><path d="M-27.05,0.38 C-27.05,-5.38 -23.26,-8.83 -12.44,-9.60 L8.11,-9.60 C20.56,-9.22 27.05,-7.30 27.05,-3.07 C27.05,0.38 24.34,1.92 20.56,2.50 C16.23,3.26 16.23,8.45 7.57,9.60 L-12.44,9.60 C-23.26,8.83 -27.05,5.76 -27.05,0.38Z" fill="url(#gh)"/></g>
<g transform="translate(418.3,461) rotate(0)"><path d="M22.15,0.37 C22.15,-5.15 19.05,-8.46 10.19,-9.20 L-6.64,-9.20 C-16.83,-8.83 -22.15,-6.99 -22.15,-2.94 C-22.15,0.37 -19.93,1.84 -16.83,2.39 C-13.29,3.13 -13.29,8.10 -6.20,9.20 L10.19,9.20 C19.05,8.46 22.15,5.52 22.15,0.37Z" fill="url(#gg)"/><path d="M22.15,0.37 C22.15,-5.15 19.05,-8.46 10.19,-9.20 L-6.64,-9.20 C-16.83,-8.83 -22.15,-6.99 -22.15,-2.94 C-22.15,0.37 -19.93,1.84 -16.83,2.39 C-13.29,3.13 -13.29,8.10 -6.20,9.20 L10.19,9.20 C19.05,8.46 22.15,5.52 22.15,0.37Z" fill="url(#gh)"/></g>
<g transform="translate(507.6,350.3) rotate(45.6)"><path d="M-24.90,-0.36 C-24.90,5.07 -21.41,8.33 -11.45,9.05 L7.47,9.05 C18.92,8.69 24.90,6.88 24.90,2.90 C24.90,-0.36 22.41,-1.81 18.92,-2.35 C14.94,-3.08 14.94,-7.96 6.97,-9.05 L-11.45,-9.05 C-21.41,-8.33 -24.90,-5.43 -24.90,-0.36Z" fill="url(#gg)"/><path d="M-24.90,-0.36 C-24.90,5.07 -21.41,8.33 -11.45,9.05 L7.47,9.05 C18.92,8.69 24.90,6.88 24.90,2.90 C24.90,-0.36 22.41,-1.81 18.92,-2.35 C14.94,-3.08 14.94,-7.96 6.97,-9.05 L-11.45,-9.05 C-21.41,-8.33 -24.90,-5.43 -24.90,-0.36Z" fill="url(#gh)"/></g>
<g transform="translate(525,388.7) rotate(-19)"><path d="M20.40,0.34 C20.40,-4.73 17.54,-7.77 9.38,-8.45 L-6.12,-8.45 C-15.50,-8.11 -20.40,-6.42 -20.40,-2.70 C-20.40,0.34 -18.36,1.69 -15.50,2.20 C-12.24,2.87 -12.24,7.44 -5.71,8.45 L9.38,8.45 C17.54,7.77 20.40,5.07 20.40,0.34Z" fill="url(#gg)"/><path d="M20.40,0.34 C20.40,-4.73 17.54,-7.77 9.38,-8.45 L-6.12,-8.45 C-15.50,-8.11 -20.40,-6.42 -20.40,-2.70 C-20.40,0.34 -18.36,1.69 -15.50,2.20 C-12.24,2.87 -12.24,7.44 -5.71,8.45 L9.38,8.45 C17.54,7.77 20.40,5.07 20.40,0.34Z" fill="url(#gh)"/></g>
<g transform="translate(533.3,416.5) rotate(73.7)"><path d="M-14.70,0.36 C-14.70,-5.01 -12.64,-8.23 -6.76,-8.95 L4.41,-8.95 C11.17,-8.59 14.70,-6.80 14.70,-2.86 C14.70,0.36 13.23,1.79 11.17,2.33 C8.82,3.04 8.82,7.88 4.12,8.95 L-6.76,8.95 C-12.64,8.23 -14.70,5.37 -14.70,0.36Z" fill="url(#gg)"/><path d="M-14.70,0.36 C-14.70,-5.01 -12.64,-8.23 -6.76,-8.95 L4.41,-8.95 C11.17,-8.59 14.70,-6.80 14.70,-2.86 C14.70,0.36 13.23,1.79 11.17,2.33 C8.82,3.04 8.82,7.88 4.12,8.95 L-6.76,8.95 C-12.64,8.23 -14.70,5.37 -14.70,0.36Z" fill="url(#gh)"/></g>
<g transform="translate(476.5,428.7) rotate(0)"><path d="M14.60,-0.33 C14.60,4.65 12.56,7.64 6.72,8.30 L-4.38,8.30 C-11.10,7.97 -14.60,6.31 -14.60,2.66 C-14.60,-0.33 -13.14,-1.66 -11.10,-2.16 C-8.76,-2.82 -8.76,-7.30 -4.09,-8.30 L6.72,-8.30 C12.56,-7.64 14.60,-4.98 14.60,-0.33Z" fill="url(#gg)"/><path d="M14.60,-0.33 C14.60,4.65 12.56,7.64 6.72,8.30 L-4.38,8.30 C-11.10,7.97 -14.60,6.31 -14.60,2.66 C-14.60,-0.33 -13.14,-1.66 -11.10,-2.16 C-8.76,-2.82 -8.76,-7.30 -4.09,-8.30 L6.72,-8.30 C12.56,-7.64 14.60,-4.98 14.60,-0.33Z" fill="url(#gh)"/></g>
<g transform="translate(470.6,449.5) rotate(0)"><path d="M-28.25,0.40 C-28.25,-5.60 -24.29,-9.20 -13.00,-10.00 L8.47,-10.00 C21.47,-9.60 28.25,-7.60 28.25,-3.20 C28.25,0.40 25.43,2.00 21.47,2.60 C16.95,3.40 16.95,8.80 7.91,10.00 L-13.00,10.00 C-24.29,9.20 -28.25,6.00 -28.25,0.40Z" fill="url(#gg)"/><path d="M-28.25,0.40 C-28.25,-5.60 -24.29,-9.20 -13.00,-10.00 L8.47,-10.00 C21.47,-9.60 28.25,-7.60 28.25,-3.20 C28.25,0.40 25.43,2.00 21.47,2.60 C16.95,3.40 16.95,8.80 7.91,10.00 L-13.00,10.00 C-24.29,9.20 -28.25,6.00 -28.25,0.40Z" fill="url(#gh)"/></g>
<g transform="translate(542.5,451) rotate(-55)"><path d="M25.40,0.36 C25.40,-5.01 21.84,-8.23 11.68,-8.95 L-7.62,-8.95 C-19.30,-8.59 -25.40,-6.80 -25.40,-2.86 C-25.40,0.36 -22.86,1.79 -19.30,2.33 C-15.24,3.04 -15.24,7.88 -7.11,8.95 L11.68,8.95 C21.84,8.23 25.40,5.37 25.40,0.36Z" fill="url(#gg)"/><path d="M25.40,0.36 C25.40,-5.01 21.84,-8.23 11.68,-8.95 L-7.62,-8.95 C-19.30,-8.59 -25.40,-6.80 -25.40,-2.86 C-25.40,0.36 -22.86,1.79 -19.30,2.33 C-15.24,3.04 -15.24,7.88 -7.11,8.95 L11.68,8.95 C21.84,8.23 25.40,5.37 25.40,0.36Z" fill="url(#gh)"/></g>
<g transform="translate(568.4,461.4) rotate(-25.2)"><path d="M-25.40,-0.37 C-25.40,5.15 -21.84,8.46 -11.68,9.20 L7.62,9.20 C19.30,8.83 25.40,6.99 25.40,2.94 C25.40,-0.37 22.86,-1.84 19.30,-2.39 C15.24,-3.13 15.24,-8.10 7.11,-9.20 L-11.68,-9.20 C-21.84,-8.46 -25.40,-5.52 -25.40,-0.37Z" fill="url(#gg)"/><path d="M-25.40,-0.37 C-25.40,5.15 -21.84,8.46 -11.68,9.20 L7.62,9.20 C19.30,8.83 25.40,6.99 25.40,2.94 C25.40,-0.37 22.86,-1.84 19.30,-2.39 C15.24,-3.13 15.24,-8.10 7.11,-9.20 L-11.68,-9.20 C-21.84,-8.46 -25.40,-5.52 -25.40,-0.37Z" fill="url(#gh)"/></g>
<g transform="translate(620.3,452) rotate(7.8)"><path d="M26.30,0.35 C26.30,-4.87 22.62,-8.00 12.10,-8.70 L-7.89,-8.70 C-19.99,-8.35 -26.30,-6.61 -26.30,-2.78 C-26.30,0.35 -23.67,1.74 -19.99,2.26 C-15.78,2.96 -15.78,7.66 -7.36,8.70 L12.10,8.70 C22.62,8.00 26.30,5.22 26.30,0.35Z" fill="url(#gg)"/><path d="M26.30,0.35 C26.30,-4.87 22.62,-8.00 12.10,-8.70 L-7.89,-8.70 C-19.99,-8.35 -26.30,-6.61 -26.30,-2.78 C-26.30,0.35 -23.67,1.74 -19.99,2.26 C-15.78,2.96 -15.78,7.66 -7.36,8.70 L12.10,8.70 C22.62,8.00 26.30,5.22 26.30,0.35Z" fill="url(#gh)"/></g>
<g transform="translate(605.5,411.8) rotate(-26.3)"><path d="M-26.65,0.37 C-26.65,-5.15 -22.92,-8.46 -12.26,-9.20 L7.99,-9.20 C20.25,-8.83 26.65,-6.99 26.65,-2.94 C26.65,0.37 23.98,1.84 20.25,2.39 C15.99,3.13 15.99,8.10 7.46,9.20 L-12.26,9.20 C-22.92,8.46 -26.65,5.52 -26.65,0.37Z" fill="url(#gg)"/><path d="M-26.65,0.37 C-26.65,-5.15 -22.92,-8.46 -12.26,-9.20 L7.99,-9.20 C20.25,-8.83 26.65,-6.99 26.65,-2.94 C26.65,0.37 23.98,1.84 20.25,2.39 C15.99,3.13 15.99,8.10 7.46,9.20 L-12.26,9.20 C-22.92,8.46 -26.65,5.52 -26.65,0.37Z" fill="url(#gh)"/></g>
<g transform="translate(697,425) rotate(-10)"><path d="M14.40,-0.39 C14.40,5.43 12.38,8.92 6.62,9.70 L-4.32,9.70 C-10.94,9.31 -14.40,7.37 -14.40,3.10 C-14.40,-0.39 -12.96,-1.94 -10.94,-2.52 C-8.64,-3.30 -8.64,-8.54 -4.03,-9.70 L6.62,-9.70 C12.38,-8.92 14.40,-5.82 14.40,-0.39Z" fill="url(#gg)"/><path d="M14.40,-0.39 C14.40,5.43 12.38,8.92 6.62,9.70 L-4.32,9.70 C-10.94,9.31 -14.40,7.37 -14.40,3.10 C-14.40,-0.39 -12.96,-1.94 -10.94,-2.52 C-8.64,-3.30 -8.64,-8.54 -4.03,-9.70 L6.62,-9.70 C12.38,-8.92 14.40,-5.82 14.40,-0.39Z" fill="url(#gh)"/></g>
<g transform="translate(699,450) rotate(-60)"><path d="M-11.40,0.33 C-11.40,-4.59 -9.80,-7.54 -5.24,-8.20 L3.42,-8.20 C8.66,-7.87 11.40,-6.23 11.40,-2.62 C11.40,0.33 10.26,1.64 8.66,2.13 C6.84,2.79 6.84,7.22 3.19,8.20 L-5.24,8.20 C-9.80,7.54 -11.40,4.92 -11.40,0.33Z" fill="url(#gg)"/><path d="M-11.40,0.33 C-11.40,-4.59 -9.80,-7.54 -5.24,-8.20 L3.42,-8.20 C8.66,-7.87 11.40,-6.23 11.40,-2.62 C11.40,0.33 10.26,1.64 8.66,2.13 C6.84,2.79 6.84,7.22 3.19,8.20 L-5.24,8.20 C-9.80,7.54 -11.40,4.92 -11.40,0.33Z" fill="url(#gh)"/></g>
<rect x="-26.0" y="-10.0" width="52.0" height="20.0" fill="none" stroke="#1ec8b4" stroke-width="0.7" transform="translate(-4,120) rotate(90)"/>
<rect x="-27.5" y="-9.0" width="55.0" height="18.0" fill="none" stroke="#d8960c" stroke-width="0.7" transform="translate(48,108) rotate(-10)"/>
<rect x="-25.5" y="-9.5" width="51.0" height="19.0" fill="none" stroke="#1ec8b4" stroke-width="0.7" transform="translate(47,131) rotate(0)"/>
<rect x="-26.0" y="-10.0" width="52.0" height="20.0" fill="none" stroke="#c8141e" stroke-width="0.7" transform="translate(17,154) rotate(-13)"/>
<rect x="-27.0" y="-10.0" width="54.0" height="20.0" fill="none" stroke="#c8141e" stroke-width="0.7" transform="translate(1,180) rotate(-5)"/>
<rect x="-25.5" y="-9.0" width="51.0" height="18.0" fill="none" stroke="#d8960c" stroke-width="0.7" transform="translate(55,195) rotate(12)"/>
<rect x="-27.0" y="-10.0" width="54.0" height="20.0" fill="none" stroke="#c8141e" stroke-width="0.7" transform="translate(126,137) rotate(43)"/>
<rect x="-12.5" y="-10.5" width="25.0" height="21.0" fill="none" stroke="#d8960c" stroke-width="0.7" transform="translate(96.5,164) rotate(-33)"/>
<rect x="-24.5" y="-9.0" width="49.0" height="18.0" fill="none" stroke="#d8960c" stroke-width="0.7" transform="translate(122,170) rotate(63)"/>
<rect x="-27.0" y="-9.5" width="54.0" height="19.0" fill="none" stroke="#d8960c" stroke-width="0.7" transform="translate(184,123) rotate(-72)"/>
<rect x="-24.0" y="-10.0" width="48.0" height="20.0" fill="none" stroke="#a8c014" stroke-width="0.7" transform="translate(193,153) rotate(-57)"/>
<rect x="-25.5" y="-9.0" width="51.0" height="18.0" fill="none" stroke="#1ec8b4" stroke-width="0.7" transform="translate(192,193) rotate(-24)"/>
<rect x="-28.0" y="-9.5" width="56.0" height="19.0" fill="none" stroke="#d8960c" stroke-width="0.7" transform="translate(212,208) rotate(-15.5)"/>
<rect x="-26.5" y="-10.0" width="53.0" height="20.0" fill="none" stroke="#d8960c" stroke-width="0.7" transform="translate(314,99) rotate(6)"/>
<rect x="-26.0" y="-9.5" width="52.0" height="19.0" fill="none" stroke="#c8141e" stroke-width="0.7" transform="translate(406,120) rotate(19)"/>
<rect x="-22.5" y="-9.5" width="45.0" height="19.0" fill="none" stroke="#1ec01e" stroke-width="0.7" transform="translate(437,95) rotate(-60)"/>
<rect x="-23.0" y="-10.0" width="46.0" height="20.0" fill="none" stroke="#d8960c" stroke-width="0.7" transform="translate(459,108) rotate(90)"/>
<rect x="-27.5" y="-9.8" width="55.0" height="19.5" fill="none" stroke="#1ec01e" stroke-width="0.7" transform="translate(396,161) rotate(-21)"/>
<rect x="-12.0" y="-12.5" width="24.0" height="25.0" fill="none" stroke="#1ec01e" stroke-width="0.7" transform="translate(446,171) rotate(0)"/>
<rect x="-26.5" y="-10.0" width="53.0" height="20.0" fill="none" stroke="#1ec8b4" stroke-width="0.7" transform="translate(361,182.5) rotate(21.5)"/>
<rect x="-27.5" y="-10.0" width="55.0" height="20.0" fill="none" stroke="#1ec8b4" stroke-width="0.7" transform="translate(316.7,208.7) rotate(90)"/>
<rect x="-27.5" y="-10.0" width="55.0" height="20.0" fill="none" stroke="#c8141e" stroke-width="0.7" transform="translate(341,213) rotate(-80)"/>
<rect x="-26.5" y="-10.0" width="53.0" height="20.0" fill="none" stroke="#1ec01e" stroke-width="0.7" transform="translate(383,215.6) rotate(-3)"/>
<rect x="-16.5" y="-10.5" width="33.0" height="21.0" fill="none" stroke="#d8960c" stroke-width="0.7" transform="translate(503,150) rotate(-73)"/>
<rect x="-27.5" y="-11.0" width="55.0" height="22.0" fill="none" stroke="#1ec01e" stroke-width="0.7" transform="translate(521,168.7) rotate(-81)"/>
<rect x="-26.0" y="-10.0" width="52.0" height="20.0" fill="none" stroke="#c8141e" stroke-width="0.7" transform="translate(474.3,195.4) rotate(-50)"/>
<rect x="-17.8" y="-11.0" width="35.6" height="22.0" fill="none" stroke="#1ec01e" stroke-width="0.7" transform="translate(496.3,212.2) rotate(-53)"/>
<rect x="-25.8" y="-9.5" width="51.5" height="19.0" fill="none" stroke="#c8141e" stroke-width="0.7" transform="translate(541,199) rotate(-14.6)"/>
<rect x="-25.3" y="-10.0" width="50.6" height="20.0" fill="none" stroke="#1ec01e" stroke-width="0.7" transform="translate(584.7,126) rotate(-51)"/>
<rect x="-26.0" y="-10.0" width="52.0" height="20.0" fill="none" stroke="#c8141e" stroke-width="0.7" transform="translate(608.6,143.5) rotate(-48)"/>
<rect x="-28.0" y="-10.3" width="56.0" height="20.7" fill="none" stroke="#1ec01e" stroke-width="0.7" transform="translate(640.6,115.4) rotate(15.4)"/>
<rect x="-25.0" y="-11.0" width="50.0" height="22.0" fill="none" stroke="#d8960c" stroke-width="0.7" transform="translate(655,84.5) rotate(-45)"/>
<rect x="-20.0" y="-10.0" width="40.0" height="20.0" fill="none" stroke="#d8960c" stroke-width="0.7" transform="translate(703,112) rotate(15)"/>
<rect x="-25.5" y="-8.5" width="51.0" height="17.0" fill="none" stroke="#c8141e" stroke-width="0.7" transform="translate(651,214) rotate(83)"/>
<rect x="-26.3" y="-9.5" width="52.6" height="19.0" fill="none" stroke="#d8960c" stroke-width="0.7" transform="translate(671.5,227) rotate(90)"/>
<rect x="-25.0" y="-10.0" width="50.0" height="20.0" fill="none" stroke="#a8c014" stroke-width="0.7" transform="translate(698.5,216.3) rotate(62)"/>
<rect x="-26.8" y="-10.0" width="53.5" height="20.0" fill="none" stroke="#1ec8b4" stroke-width="0.7" transform="translate(43,217) rotate(0)"/>
<rect x="-24.0" y="-9.8" width="48.0" height="19.5" fill="none" stroke="#1ec8b4" stroke-width="0.7" transform="translate(75.4,227.3) rotate(-61.5)"/>
<rect x="-26.5" y="-9.8" width="53.0" height="19.7" fill="none" stroke="#1ec8b4" stroke-width="0.7" transform="translate(94,253.3) rotate(-26.8)"/>
<rect x="-25.0" y="-9.8" width="50.0" height="19.5" fill="none" stroke="#1ec8b4" stroke-width="0.7" transform="translate(9.4,247) rotate(21)"/>
<rect x="-18.0" y="-8.2" width="36.0" height="16.5" fill="none" stroke="#a8c014" stroke-width="0.7" transform="translate(6,266) rotate(22)"/>
<rect x="-26.3" y="-9.3" width="52.6" height="18.7" fill="none" stroke="#1ec01e" stroke-width="0.7" transform="translate(43,280.6) rotate(-21.7)"/>
<rect x="-25.5" y="-10.0" width="51.0" height="20.0" fill="none" stroke="#d8960c" stroke-width="0.7" transform="translate(39,306.5) rotate(-27)"/>
<rect x="-25.0" y="-10.0" width="50.0" height="20.0" fill="none" stroke="#d8960c" stroke-width="0.7" transform="translate(8,311) rotate(90)"/>
<rect x="-27.5" y="-10.5" width="55.0" height="21.0" fill="none" stroke="#1ec8b4" stroke-width="0.7" transform="translate(76.4,314) rotate(82)"/>
<rect x="-26.5" y="-10.5" width="53.0" height="21.0" fill="none" stroke="#1ec8b4" stroke-width="0.7" transform="translate(46.8,343) rotate(-64)"/>
<rect x="-26.5" y="-10.0" width="53.0" height="20.0" fill="none" stroke="#d8960c" stroke-width="0.7" transform="translate(141.6,285.2) rotate(-39.6)"/>
<rect x="-24.0" y="-9.8" width="48.0" height="19.5" fill="none" stroke="#c8141e" stroke-width="0.7" transform="translate(148,314.5) rotate(-25)"/>
<rect x="-19.5" y="-9.5" width="39.0" height="19.0" fill="none" stroke="#1ec01e" stroke-width="0.7" transform="translate(165.5,250) rotate(4)"/>
<rect x="-12.3" y="-7.5" width="24.7" height="15.0" fill="none" stroke="#a8c014" stroke-width="0.7" transform="translate(178,268.9) rotate(12.7)"/>
<rect x="-26.5" y="-10.4" width="53.0" height="20.8" fill="none" stroke="#1ec8b4" stroke-width="0.7" transform="translate(195,231) rotate(0)"/>
<rect x="-26.9" y="-10.8" width="53.8" height="21.5" fill="none" stroke="#1ec8b4" stroke-width="0.7" transform="translate(196.7,285.2) rotate(-21.8)"/>
<rect x="-20.0" y="-10.0" width="40.0" height="20.0" fill="none" stroke="#1ec01e" stroke-width="0.7" transform="translate(207.4,336.8) rotate(64)"/>
<rect x="-23.0" y="-9.3" width="46.0" height="18.7" fill="none" stroke="#d8960c" stroke-width="0.7" transform="translate(411,233) rotate(0)"/>
<rect x="-14.5" y="-7.8" width="29.0" height="15.6" fill="none" stroke="#d8960c" stroke-width="0.7" transform="translate(441.8,224.7) rotate(64)"/>
<rect x="-11.0" y="-11.0" width="22.0" height="22.0" fill="none" stroke="#a8c014" stroke-width="0.7" transform="translate(375.5,239) rotate(-17)"/>
<rect x="-26.0" y="-10.0" width="52.0" height="20.0" fill="none" stroke="#c8141e" stroke-width="0.7" transform="translate(241,264) rotate(-50)"/>
<rect x="-27.5" y="-10.0" width="55.0" height="20.0" fill="none" stroke="#1ec8b4" stroke-width="0.7" transform="translate(310.6,261.8) rotate(-9.2)"/>
<rect x="-27.3" y="-10.0" width="54.6" height="20.0" fill="none" stroke="#c8141e" stroke-width="0.7" transform="translate(285.9,283.2) rotate(2)"/>
<rect x="-23.9" y="-9.8" width="47.8" height="19.5" fill="none" stroke="#1ec01e" stroke-width="0.7" transform="translate(347,257.7) rotate(-56)"/>
<rect x="-28.3" y="-10.5" width="56.6" height="21.0" fill="none" stroke="#1ec8b4" stroke-width="0.7" transform="translate(380.2,261.8) rotate(-25.3)"/>
<rect x="-27.3" y="-10.9" width="54.6" height="21.8" fill="none" stroke="#1ec8b4" stroke-width="0.7" transform="translate(363,287) rotate(4)"/>
<rect x="-26.5" y="-8.8" width="53.0" height="17.7" fill="none" stroke="#a8c014" stroke-width="0.7" transform="translate(404,269.6) rotate(-54)"/>
<rect x="-25.0" y="-9.0" width="50.0" height="18.0" fill="none" stroke="#1ec01e" stroke-width="0.7" transform="translate(415.3,302) rotate(-59)"/>
<rect x="-27.0" y="-10.0" width="54.0" height="20.0" fill="none" stroke="#d8960c" stroke-width="0.7" transform="translate(448.3,280) rotate(-76)"/>
<rect x="-25.5" y="-9.2" width="51.0" height="18.5" fill="none" stroke="#c8141e" stroke-width="0.7" transform="translate(463.5,242) rotate(-31.6)"/>
<rect x="-15.0" y="-9.0" width="30.0" height="18.0" fill="none" stroke="#1ec8b4" stroke-width="0.7" transform="translate(450,311) rotate(-25)"/>
<rect x="-25.5" y="-10.5" width="51.0" height="21.0" fill="none" stroke="#1ec8b4" stroke-width="0.7" transform="translate(247.7,308) rotate(31)"/>
<rect x="-27.5" y="-10.0" width="55.0" height="20.0" fill="none" stroke="#1ec8b4" stroke-width="0.7" transform="translate(315,309.5) rotate(24.6)"/>
<rect x="-25.9" y="-8.2" width="51.7" height="16.4" fill="none" stroke="#a8c014" stroke-width="0.7" transform="translate(291.9,325.9) rotate(40)"/>
<rect x="-25.0" y="-10.5" width="50.0" height="21.0" fill="none" stroke="#1ec01e" stroke-width="0.7" transform="translate(241.5,330.5) rotate(37)"/>
<rect x="-26.8" y="-9.9" width="53.6" height="19.8" fill="none" stroke="#d8960c" stroke-width="0.7" transform="translate(555.6,225.2) rotate(19.2)"/>
<rect x="-28.3" y="-10.4" width="56.6" height="20.8" fill="none" stroke="#c8141e" stroke-width="0.7" transform="translate(549.7,255.9) rotate(-20.7)"/>
<rect x="-25.4" y="-10.4" width="50.7" height="20.8" fill="none" stroke="#c8141e" stroke-width="0.7" transform="translate(597.7,236.4) rotate(75.5)"/>
<rect x="-22.5" y="-9.2" width="45.0" height="18.4" fill="none" stroke="#d8960c" stroke-width="0.7" transform="translate(567.8,272.8) rotate(-6)"/>
<rect x="-26.9" y="-10.7" width="53.8" height="21.3" fill="none" stroke="#1ec01e" stroke-width="0.7" transform="translate(607,287) rotate(90)"/>
<rect x="-27.9" y="-10.2" width="55.7" height="20.3" fill="none" stroke="#1ec8b4" stroke-width="0.7" transform="translate(515,290.4) rotate(11.6)"/>
<rect x="-26.5" y="-10.5" width="53.0" height="21.0" fill="none" stroke="#c8141e" stroke-width="0.7" transform="translate(474.3,322) rotate(-47)"/>
<rect x="-15.0" y="-11.0" width="30.0" height="22.0" fill="none" stroke="#1ec01e" stroke-width="0.7" transform="translate(694,277) rotate(-10)"/>
<rect x="-26.0" y="-10.0" width="52.0" height="20.0" fill="none" stroke="#a8c014" stroke-width="0.7" transform="translate(672.6,320) rotate(-27)"/>
<rect x="-26.2" y="-10.4" width="52.5" height="20.8" fill="none" stroke="#d8960c" stroke-width="0.7" transform="translate(37.2,379.6) rotate(0)"/>
<rect x="-28.5" y="-10.0" width="57.0" height="20.0" fill="none" stroke="#1ec8b4" stroke-width="0.7" transform="translate(17.9,350.3) rotate(-57.6)"/>
<rect x="-28.0" y="-10.2" width="56.0" height="20.5" fill="none" stroke="#1ec8b4" stroke-width="0.7" transform="translate(83.7,375.7) rotate(32.3)"/>
<rect x="-28.0" y="-10.4" width="56.0" height="20.8" fill="none" stroke="#1ec01e" stroke-width="0.7" transform="translate(81,410) rotate(39.7)"/>
<rect x="-26.0" y="-10.9" width="52.0" height="21.8" fill="none" stroke="#1ec01e" stroke-width="0.7" transform="translate(42.1,419) rotate(45.6)"/>
<rect x="-8.0" y="-8.0" width="16.0" height="16.0" fill="none" stroke="#a8c014" stroke-width="0.7" transform="translate(10.1,422) rotate(0)"/>
<rect x="-17.3" y="-9.3" width="34.6" height="18.7" fill="none" stroke="#1ec01e" stroke-width="0.7" transform="translate(26,436) rotate(-13)"/>
<rect x="-25.8" y="-9.5" width="51.5" height="19.0" fill="none" stroke="#d8960c" stroke-width="0.7" transform="translate(27.3,457.3) rotate(-10)"/>
<rect x="-26.4" y="-9.7" width="52.7" height="19.3" fill="none" stroke="#1ec8b4" stroke-width="0.7" transform="translate(92.3,445) rotate(-15.7)"/>
<rect x="-27.5" y="-10.7" width="55.0" height="21.4" fill="none" stroke="#c8141e" stroke-width="0.7" transform="translate(136.4,430.8) rotate(27.5)"/>
<rect x="-25.0" y="-10.0" width="50.0" height="20.0" fill="none" stroke="#1ec8b4" stroke-width="0.7" transform="translate(113,467) rotate(-73.5)"/>
<rect x="-26.0" y="-10.0" width="52.0" height="20.0" fill="none" stroke="#1ec01e" stroke-width="0.7" transform="translate(137.5,470) rotate(88)"/>
<rect x="-25.0" y="-10.5" width="50.0" height="21.0" fill="none" stroke="#d8960c" stroke-width="0.7" transform="translate(79,483) rotate(83)"/>
<rect x="-26.0" y="-9.3" width="52.0" height="18.7" fill="none" stroke="#1ec01e" stroke-width="0.7" transform="translate(200,437.3) rotate(32.7)"/>
<rect x="-22.3" y="-10.5" width="44.6" height="21.0" fill="none" stroke="#a8c014" stroke-width="0.7" transform="translate(224.2,425) rotate(24.2)"/>
<rect x="-26.0" y="-9.2" width="52.0" height="18.5" fill="none" stroke="#d8960c" stroke-width="0.7" transform="translate(241.5,448.4) rotate(-26)"/>
<rect x="-26.9" y="-10.0" width="53.8" height="20.0" fill="none" stroke="#c8141e" stroke-width="0.7" transform="translate(286.7,346.7) rotate(34.8)"/>
<rect x="-23.6" y="-9.2" width="47.2" height="18.3" fill="none" stroke="#d8960c" stroke-width="0.7" transform="translate(327.5,345.4) rotate(56.2)"/>
<rect x="-25.5" y="-10.8" width="51.0" height="21.6" fill="none" stroke="#1ec01e" stroke-width="0.7" transform="translate(276.8,394.4) rotate(-58.6)"/>
<rect x="-27.5" y="-9.9" width="55.0" height="19.8" fill="none" stroke="#1ec8b4" stroke-width="0.7" transform="translate(291.9,409.4) rotate(-54.6)"/>
<rect x="-27.5" y="-11.0" width="55.0" height="22.0" fill="none" stroke="#1ec01e" stroke-width="0.7" transform="translate(333.4,393) rotate(-60.3)"/>
<rect x="-26.5" y="-10.0" width="53.0" height="20.0" fill="none" stroke="#c8141e" stroke-width="0.7" transform="translate(431.4,417.2) rotate(17.9)"/>
<rect x="-25.5" y="-9.3" width="51.0" height="18.7" fill="none" stroke="#c8141e" stroke-width="0.7" transform="translate(415.3,433.4) rotate(34.5)"/>
<rect x="-12.8" y="-11.0" width="25.5" height="22.0" fill="none" stroke="#c8141e" stroke-width="0.7" transform="translate(429.6,349.3) rotate(15)"/>
<rect x="-27.6" y="-10.4" width="55.3" height="20.8" fill="none" stroke="#1ec01e" stroke-width="0.7" transform="translate(463.25,367) rotate(-45)"/>
<rect x="-22.8" y="-10.0" width="45.5" height="20.0" fill="none" stroke="#d8960c" stroke-width="0.7" transform="translate(418.3,461) rotate(0)"/>
<rect x="-25.5" y="-9.8" width="51.0" height="19.7" fill="none" stroke="#c8141e" stroke-width="0.7" transform="translate(507.6,350.3) rotate(45.6)"/>
<rect x="-21.0" y="-9.2" width="42.0" height="18.5" fill="none" stroke="#a8c014" stroke-width="0.7" transform="translate(525,388.7) rotate(-19)"/>
<rect x="-15.3" y="-9.8" width="30.6" height="19.5" fill="none" stroke="#1ec01e" stroke-width="0.7" transform="translate(533.3,416.5) rotate(73.7)"/>
<rect x="-15.2" y="-9.1" width="30.4" height="18.2" fill="none" stroke="#a8c014" stroke-width="0.7" transform="translate(476.5,428.7) rotate(0)"/>
<rect x="-28.9" y="-10.8" width="57.7" height="21.6" fill="none" stroke="#1ec01e" stroke-width="0.7" transform="translate(470.6,449.5) rotate(0)"/>
<rect x="-26.0" y="-9.8" width="52.0" height="19.5" fill="none" stroke="#1ec8b4" stroke-width="0.7" transform="translate(542.5,451) rotate(-55)"/>
<rect x="-26.0" y="-10.0" width="52.0" height="20.0" fill="none" stroke="#1ec8b4" stroke-width="0.7" transform="translate(568.4,461.4) rotate(-25.2)"/>
<rect x="-26.9" y="-9.5" width="53.8" height="19.0" fill="none" stroke="#1ec8b4" stroke-width="0.7" transform="translate(620.3,452) rotate(7.8)"/>
<rect x="-27.2" y="-10.0" width="54.5" height="20.0" fill="none" stroke="#d8960c" stroke-width="0.7" transform="translate(605.5,411.8) rotate(-26.3)"/>
<rect x="-15.0" y="-10.5" width="30.0" height="21.0" fill="none" stroke="#a8c014" stroke-width="0.7" transform="translate(697,425) rotate(-10)"/>
<rect x="-12.0" y="-9.0" width="24.0" height="18.0" fill="none" stroke="#a8c014" stroke-width="0.7" transform="translate(699,450) rotate(-60)"/>
<text x="-4" y="122.4" font-size="7" fill="#30dccc" text-anchor="middle">5</text>
<text x="48" y="110.4" font-size="7" fill="#f0a81c" text-anchor="middle">2</text>
<text x="47" y="133.4" font-size="7" fill="#30dccc" text-anchor="middle">5</text>
<text x="17" y="156.4" font-size="7" fill="#e8283a" text-anchor="middle">1</text>
<text x="1" y="182.4" font-size="7" fill="#e8283a" text-anchor="middle">1</text>
<text x="55" y="197.4" font-size="7" fill="#f0a81c" text-anchor="middle">2</text>
<text x="126" y="139.4" font-size="7" fill="#e8283a" text-anchor="middle">1</text>
<text x="96.5" y="166.4" font-size="7" fill="#f0a81c" text-anchor="middle">2</text>
<text x="122" y="172.4" font-size="7" fill="#f0a81c" text-anchor="middle">2</text>
<text x="184" y="125.4" font-size="7" fill="#f0a81c" text-anchor="middle">2</text>
<text x="193" y="155.4" font-size="7" fill="#bcd828" text-anchor="middle">3</text>
<text x="192" y="195.4" font-size="7" fill="#30dccc" text-anchor="middle">5</text>
<text x="212" y="210.4" font-size="7" fill="#f0a81c" text-anchor="middle">2</text>
<text x="314" y="101.4" font-size="7" fill="#f0a81c" text-anchor="middle">2</text>
<text x="406" y="122.4" font-size="7" fill="#e8283a" text-anchor="middle">1</text>
<text x="437" y="97.4" font-size="7" fill="#30e030" text-anchor="middle">4</text>
<text x="459" y="110.4" font-size="7" fill="#f0a81c" text-anchor="middle">2</text>
<text x="396" y="163.4" font-size="7" fill="#30e030" text-anchor="middle">4</text>
<text x="446" y="173.4" font-size="7" fill="#30e030" text-anchor="middle">4</text>
<text x="361" y="184.9" font-size="7" fill="#30dccc" text-anchor="middle">5</text>
<text x="316.7" y="211.1" font-size="7" fill="#30dccc" text-anchor="middle">5</text>
<text x="341" y="215.4" font-size="7" fill="#e8283a" text-anchor="middle">1</text>
<text x="383" y="218.0" font-size="7" fill="#30e030" text-anchor="middle">4</text>
<text x="503" y="152.4" font-size="7" fill="#f0a81c" text-anchor="middle">2</text>
<text x="521" y="171.1" font-size="7" fill="#30e030" text-anchor="middle">4</text>
<text x="474.3" y="197.8" font-size="7" fill="#e8283a" text-anchor="middle">1</text>
<text x="496.3" y="214.6" font-size="7" fill="#30e030" text-anchor="middle">4</text>
<text x="541" y="201.4" font-size="7" fill="#e8283a" text-anchor="middle">1</text>
<text x="584.7" y="128.4" font-size="7" fill="#30e030" text-anchor="middle">4</text>
<text x="608.6" y="145.9" font-size="7" fill="#e8283a" text-anchor="middle">1</text>
<text x="640.6" y="117.80000000000001" font-size="7" fill="#30e030" text-anchor="middle">4</text>
<text x="655" y="86.9" font-size="7" fill="#f0a81c" text-anchor="middle">2</text>
<text x="703" y="114.4" font-size="7" fill="#f0a81c" text-anchor="middle">2</text>
<text x="651" y="216.4" font-size="7" fill="#e8283a" text-anchor="middle">1</text>
<text x="671.5" y="229.4" font-size="7" fill="#f0a81c" text-anchor="middle">2</text>
<text x="698.5" y="218.70000000000002" font-size="7" fill="#bcd828" text-anchor="middle">3</text>
<text x="43" y="219.4" font-size="7" fill="#30dccc" text-anchor="middle">5</text>
<text x="75.4" y="229.70000000000002" font-size="7" fill="#30dccc" text-anchor="middle">5</text>
<text x="94" y="255.70000000000002" font-size="7" fill="#30dccc" text-anchor="middle">5</text>
<text x="9.4" y="249.4" font-size="7" fill="#30dccc" text-anchor="middle">5</text>
<text x="6" y="268.4" font-size="7" fill="#bcd828" text-anchor="middle">3</text>
<text x="43" y="283.0" font-size="7" fill="#30e030" text-anchor="middle">4</text>
<text x="39" y="308.9" font-size="7" fill="#f0a81c" text-anchor="middle">2</text>
<text x="8" y="313.4" font-size="7" fill="#f0a81c" text-anchor="middle">2</text>
<text x="76.4" y="316.4" font-size="7" fill="#30dccc" text-anchor="middle">5</text>
<text x="46.8" y="345.4" font-size="7" fill="#30dccc" text-anchor="middle">5</text>
<text x="141.6" y="287.59999999999997" font-size="7" fill="#f0a81c" text-anchor="middle">2</text>
<text x="148" y="316.9" font-size="7" fill="#e8283a" text-anchor="middle">1</text>
<text x="165.5" y="252.4" font-size="7" fill="#30e030" text-anchor="middle">4</text>
<text x="178" y="271.29999999999995" font-size="7" fill="#bcd828" text-anchor="middle">3</text>
<text x="195" y="233.4" font-size="7" fill="#30dccc" text-anchor="middle">5</text>
<text x="196.7" y="287.59999999999997" font-size="7" fill="#30dccc" text-anchor="middle">5</text>
<text x="207.4" y="339.2" font-size="7" fill="#30e030" text-anchor="middle">4</text>
<text x="411" y="235.4" font-size="7" fill="#f0a81c" text-anchor="middle">2</text>
<text x="441.8" y="227.1" font-size="7" fill="#f0a81c" text-anchor="middle">2</text>
<text x="375.5" y="241.4" font-size="7" fill="#bcd828" text-anchor="middle">3</text>
<text x="241" y="266.4" font-size="7" fill="#e8283a" text-anchor="middle">1</text>
<text x="310.6" y="264.2" font-size="7" fill="#30dccc" text-anchor="middle">5</text>
<text x="285.9" y="285.59999999999997" font-size="7" fill="#e8283a" text-anchor="middle">1</text>
<text x="347" y="260.09999999999997" font-size="7" fill="#30e030" text-anchor="middle">4</text>
<text x="380.2" y="264.2" font-size="7" fill="#30dccc" text-anchor="middle">5</text>
<text x="363" y="289.4" font-size="7" fill="#30dccc" text-anchor="middle">5</text>
<text x="404" y="272.0" font-size="7" fill="#bcd828" text-anchor="middle">3</text>
<text x="415.3" y="304.4" font-size="7" fill="#30e030" text-anchor="middle">4</text>
<text x="448.3" y="282.4" font-size="7" fill="#f0a81c" text-anchor="middle">2</text>
<text x="463.5" y="244.4" font-size="7" fill="#e8283a" text-anchor="middle">1</text>
<text x="450" y="313.4" font-size="7" fill="#30dccc" text-anchor="middle">5</text>
<text x="247.7" y="310.4" font-size="7" fill="#30dccc" text-anchor="middle">5</text>
<text x="315" y="311.9" font-size="7" fill="#30dccc" text-anchor="middle">5</text>
<text x="291.9" y="328.29999999999995" font-size="7" fill="#bcd828" text-anchor="middle">3</text>
<text x="241.5" y="332.9" font-size="7" fill="#30e030" text-anchor="middle">4</text>
<text x="555.6" y="227.6" font-size="7" fill="#f0a81c" text-anchor="middle">2</text>
<text x="549.7" y="258.3" font-size="7" fill="#e8283a" text-anchor="middle">1</text>
<text x="597.7" y="238.8" font-size="7" fill="#e8283a" text-anchor="middle">1</text>
<text x="567.8" y="275.2" font-size="7" fill="#f0a81c" text-anchor="middle">2</text>
<text x="607" y="289.4" font-size="7" fill="#30e030" text-anchor="middle">4</text>
<text x="515" y="292.79999999999995" font-size="7" fill="#30dccc" text-anchor="middle">5</text>
<text x="474.3" y="324.4" font-size="7" fill="#e8283a" text-anchor="middle">1</text>
<text x="694" y="279.4" font-size="7" fill="#30e030" text-anchor="middle">4</text>
<text x="672.6" y="322.4" font-size="7" fill="#bcd828" text-anchor="middle">3</text>
<text x="37.2" y="382.0" font-size="7" fill="#f0a81c" text-anchor="middle">2</text>
<text x="17.9" y="352.7" font-size="7" fill="#30dccc" text-anchor="middle">5</text>
<text x="83.7" y="378.09999999999997" font-size="7" fill="#30dccc" text-anchor="middle">5</text>
<text x="81" y="412.4" font-size="7" fill="#30e030" text-anchor="middle">4</text>
<text x="42.1" y="421.4" font-size="7" fill="#30e030" text-anchor="middle">4</text>
<text x="10.1" y="424.4" font-size="7" fill="#bcd828" text-anchor="middle">3</text>
<text x="26" y="438.4" font-size="7" fill="#30e030" text-anchor="middle">4</text>
<text x="27.3" y="459.7" font-size="7" fill="#f0a81c" text-anchor="middle">2</text>
<text x="92.3" y="447.4" font-size="7" fill="#30dccc" text-anchor="middle">5</text>
<text x="136.4" y="433.2" font-size="7" fill="#e8283a" text-anchor="middle">1</text>
<text x="113" y="469.4" font-size="7" fill="#30dccc" text-anchor="middle">5</text>
<text x="137.5" y="472.4" font-size="7" fill="#30e030" text-anchor="middle">4</text>
<text x="79" y="485.4" font-size="7" fill="#f0a81c" text-anchor="middle">2</text>
<text x="200" y="439.7" font-size="7" fill="#30e030" text-anchor="middle">4</text>
<text x="224.2" y="427.4" font-size="7" fill="#bcd828" text-anchor="middle">3</text>
<text x="241.5" y="450.79999999999995" font-size="7" fill="#f0a81c" text-anchor="middle">2</text>
<text x="286.7" y="349.09999999999997" font-size="7" fill="#e8283a" text-anchor="middle">1</text>
<text x="327.5" y="347.79999999999995" font-size="7" fill="#f0a81c" text-anchor="middle">2</text>
<text x="276.8" y="396.79999999999995" font-size="7" fill="#30e030" text-anchor="middle">4</text>
<text x="291.9" y="411.79999999999995" font-size="7" fill="#30dccc" text-anchor="middle">5</text>
<text x="333.4" y="395.4" font-size="7" fill="#30e030" text-anchor="middle">4</text>
<text x="431.4" y="419.59999999999997" font-size="7" fill="#e8283a" text-anchor="middle">1</text>
<text x="415.3" y="435.79999999999995" font-size="7" fill="#e8283a" text-anchor="middle">1</text>
<text x="429.6" y="351.7" font-size="7" fill="#e8283a" text-anchor="middle">1</text>
<text x="463.25" y="369.4" font-size="7" fill="#30e030" text-anchor="middle">4</text>
<text x="418.3" y="463.4" font-size="7" fill="#f0a81c" text-anchor="middle">2</text>
<text x="507.6" y="352.7" font-size="7" fill="#e8283a" text-anchor="middle">1</text>
<text x="525" y="391.09999999999997" font-size="7" fill="#bcd828" text-anchor="middle">3</text>
<text x="533.3" y="418.9" font-size="7" fill="#30e030" text-anchor="middle">4</text>
<text x="476.5" y="431.09999999999997" font-size="7" fill="#bcd828" text-anchor="middle">3</text>
<text x="470.6" y="451.9" font-size="7" fill="#30e030" text-anchor="middle">4</text>
<text x="542.5" y="453.4" font-size="7" fill="#30dccc" text-anchor="middle">5</text>
<text x="568.4" y="463.79999999999995" font-size="7" fill="#30dccc" text-anchor="middle">5</text>
<text x="620.3" y="454.4" font-size="7" fill="#30dccc" text-anchor="middle">5</text>
<text x="605.5" y="414.2" font-size="7" fill="#f0a81c" text-anchor="middle">2</text>
<text x="697" y="427.4" font-size="7" fill="#bcd828" text-anchor="middle">3</text>
<text x="699" y="452.4" font-size="7" fill="#bcd828" text-anchor="middle">3</text>
<text x="35" y="105" font-size="17" font-weight="bold" fill="#cccccc" fill-opacity="0.55" text-anchor="middle" transform="rotate(-29 35 99)" font-family="'Liberation Sans','Noto Sans CJK SC',sans-serif">托普云农</text>
<text x="244.5" y="150" font-size="17" font-weight="bold" fill="#cccccc" fill-opacity="0.55" text-anchor="middle" transform="rotate(-29 244.5 144)" font-family="'Liberation Sans','Noto Sans CJK SC',sans-serif">托普云农</text>
<text x="493" y="164" font-size="17" font-weight="bold" fill="#cccccc" fill-opacity="0.55" text-anchor="middle" transform="rotate(-29 493 158)" font-family="'Liberation Sans','Noto Sans CJK SC',sans-serif">托普云农</text>
<text x="588" y="103" font-size="17" font-weight="bold" fill="#cccccc" fill-opacity="0.55" text-anchor="middle" transform="rotate(-29 588 97)" font-family="'Liberation Sans','Noto Sans CJK SC',sans-serif">托普云农</text>
<text x="135" y="215" font-size="17" font-weight="bold" fill="#cccccc" fill-opacity="0.55" text-anchor="middle" transform="rotate(-29 135 209)" font-family="'Liberation Sans','Noto Sans CJK SC',sans-serif">托普云农</text>
<text x="387" y="231" font-size="17" font-weight="bold" fill="#cccccc" fill-opacity="0.55" text-anchor="middle" transform="rotate(-29 387 225)" font-family="'Liberation Sans','Noto Sans CJK SC',sans-serif">托普云农</text>
<text x="692" y="219" font-size="17" font-weight="bold" fill="#cccccc" fill-opacity="0.55" text-anchor="middle" transform="rotate(-29 692 213)" font-family="'Liberation Sans','Noto Sans CJK SC',sans-serif">托普云农</text>
<text x="34" y="286" font-size="17" font-weight="bold" fill="#cccccc" fill-opacity="0.55" text-anchor="middle" transform="rotate(-29 34 280)" font-family="'Liberation Sans','Noto Sans CJK SC',sans-serif">托普云农</text>
<text x="283" y="303" font-size="17" font-weight="bold" fill="#cccccc" fill-opacity="0.55" text-anchor="middle" transform="rotate(-29 283 297)" font-family="'Liberation Sans','Noto Sans CJK SC',sans-serif">托普云农</text>
<text x="588" y="283" font-size="17" font-weight="bold" fill="#cccccc" fill-opacity="0.55" text-anchor="middle" transform="rotate(-29 588 277)" font-family="'Liberation Sans','Noto Sans CJK SC',sans-serif">托普云农</text>
<text x="371" y="399" font-size="17" font-weight="bold" fill="#cccccc" fill-opacity="0.55" text-anchor="middle" transform="rotate(-29 371 393)" font-family="'Liberation Sans','Noto Sans CJK SC',sans-serif">托普云农</text>
<text x="250" y="474" font-size="17" font-weight="bold" fill="#cccccc" fill-opacity="0.55" text-anchor="middle" transform="rotate(-29 250 468)" font-family="'Liberation Sans','Noto Sans CJK SC',sans-serif">托普云农</text>
</svg>
<!-- cursor -->
<svg style="position:absolute;left:357px;top:329.500px" width="4.200" height="5.600" viewBox="0 0 6 8"><path d="M0.500 0.500v6l1.500-1.400 1 2.200 1-0.500-1-2.100h2z" fill="#eee"/></svg>
<!-- image v scrollbar -->
<div style="position:absolute;left:690px;top:93px;width:7.400px;height:377.300px;background:linear-gradient(90deg,#f0f0f0 0,#f0f0f0 85%,#dcdcdc 100%)"></div>
<div style="position:absolute;left:690.800px;top:205.400px;width:6.400px;height:153px;background:#cdcdcd"></div>
<svg style="position:absolute;left:691px;top:95px" width="5" height="4" viewBox="0 0 5 4"><path d="M0.700 3L2.500 1 4.300 3" stroke="#444" stroke-width="0.700" fill="none"/></svg>
<svg style="position:absolute;left:691px;top:465px" width="5" height="4" viewBox="0 0 5 4"><path d="M0.700 1L2.500 3 4.300 1" stroke="#444" stroke-width="0.700" fill="none"/></svg>
<!-- image h scrollbar -->
<div style="position:absolute;left:0;top:463px;width:690px;height:7.300px;background:#f0f0f0"></div>
<div style="position:absolute;left:168px;top:463.600px;width:354px;height:6.400px;background:#cdcdcd"></div>
<svg style="position:absolute;left:1.500px;top:464.500px" width="4" height="5" viewBox="0 0 4 5"><path d="M3 0.700L1 2.500 3 4.300" stroke="#444" stroke-width="0.700" fill="none"/></svg>
<svg style="position:absolute;left:683.500px;top:464.500px" width="4" height="5" viewBox="0 0 4 5"><path d="M1 0.700L3 2.500 1 4.300" stroke="#444" stroke-width="0.700" fill="none"/></svg>
<!-- status bar -->
<div style="position:absolute;left:0;top:470.300px;width:890px;height:11px;background:#fefefe"></div>
<div class="t" style="left:12px;top:472.500px;font-size:5.800px">当前分析进度:分析完成</div>
<div class="t" style="left:160px;top:472.500px;font-size:5.800px">当前标定像素:300DPI</div>
<div class="t" style="left:305px;top:472.500px;font-size:5.800px">当前缩放比例:160%</div>
<!-- right panel -->
<div style="position:absolute;left:697.200px;top:82px;width:193px;height:24px;background:#c9cdd1"></div>
<div style="position:absolute;left:697px;top:105.500px;width:193px;height:366px;background:#fdfdfd"></div>
<div style="position:absolute;left:697px;top:105.500px;width:193px;height:25px;background:#efefef"></div>
<svg style="position:absolute;left:697px;top:89px" width="193" height="17" viewBox="697 89 193 17">
<path d="M698 106L701 92Q701.300 90.500 703 90.500H741Q742.500 90.500 742.800 92L745.500 106z" fill="#d6d6d6" stroke="#c4c6c8" stroke-width="0.400"/>
<path d="M746 106L749 92Q749.300 90.500 751 90.500H789Q790.500 90.500 790.800 92L793.500 106z" fill="#d6d6d6" stroke="#c4c6c8" stroke-width="0.400"/>
<path d="M794 106L797 92Q797.300 90.500 799 90.500H837Q838.500 90.500 838.800 92L841.500 106z" fill="#d6d6d6" stroke="#c4c6c8" stroke-width="0.400"/>
<path d="M842 106L845 92Q845.300 90.500 847 90.500H886Q887.500 90.500 887.800 92L890 106z" fill="#fbfbfb"/>
</svg>
<div class="ptab" style="left:699px;width:45px">粒型分析</div>
<div class="ptab" style="left:747px;width:45px">粒型数据</div>
<div class="ptab" style="left:795px;width:45px">垩白数据</div>
<div class="ptab" style="left:843px;width:46px">智能分类</div>
<div style="position:absolute;left:709px;top:111.500px;width:40.500px;height:15px;background:#d2d2d2;border:0.600px solid #c2c2c2;border-radius:1.500px;font-size:6px;line-height:14.500px;text-align:center">筛选条件</div>
<div style="position:absolute;left:753px;top:111.500px;width:40.500px;height:15px;background:#fdfdfd;border:0.600px solid #d5d5d5;border-radius:1.500px;font-size:6px;line-height:14.500px;text-align:center">展示数据</div>
<div style="position:absolute;left:796px;top:111px;width:41px;height:15px;background:#d2d2d2;border:0.600px solid #c2c2c2;border-radius:1.500px;font-size:6px;line-height:14.500px;text-align:center">分类分析</div>
<div class="t" style="left:703px;top:136px;font-size:6.600px">图像展示</div>
<div class="t" style="left:704.500px;top:150.500px;font-size:5.800px">类别</div>
<div style="position:absolute;left:723px;top:147px;width:56.500px;height:13.500px;border:0.700px solid #c8c8c8;border-radius:1.500px;background:#fff"></div>
<div class="t" style="left:726.500px;top:150px;font-size:6px">长(mm)</div>
<div style="position:absolute;left:770.500px;top:148px;width:8px;height:11.500px;background:#ececec"></div>
<svg style="position:absolute;left:772.500px;top:152.500px" width="4" height="3" viewBox="0 0 4 3"><path d="M0.500 0.500h3L2 2.500z" fill="#333"/></svg>
<div class="t" style="left:784px;top:150px;font-size:5.800px">分类数目</div>
<div style="position:absolute;left:812.500px;top:147px;width:53.500px;height:13.500px;border:0.700px solid #c8c8c8;border-radius:1.500px;background:#fff;font-size:6px;line-height:12.500px;text-align:center">5</div>
<div class="t" style="left:869px;top:150px;font-size:5.800px;color:#1e86e0">自定义</div>

<svg style="position:absolute;left:697px;top:163px" width="193" height="108" viewBox="697 163 193 108" font-family="'Liberation Sans','Noto Sans CJK SC',sans-serif">
<line x1="734" x2="886" y1="229.3" y2="229.3" stroke="#e2e2e2" stroke-width="0.5"/>
<line x1="734" x2="886" y1="214.8" y2="214.8" stroke="#e2e2e2" stroke-width="0.5"/>
<line x1="734" x2="886" y1="200.4" y2="200.4" stroke="#e2e2e2" stroke-width="0.5"/>
<line x1="734" x2="886" y1="185.9" y2="185.9" stroke="#e2e2e2" stroke-width="0.5"/>
<line x1="734" x2="886" y1="171.4" y2="171.4" stroke="#e2e2e2" stroke-width="0.5"/>
<line x1="732.5" x2="734" y1="243.8" y2="243.8" stroke="#333" stroke-width="0.5"/>
<text x="731.5" y="246.0" font-size="6.3" fill="#333" text-anchor="end">0</text>
<line x1="732.5" x2="734" y1="229.3" y2="229.3" stroke="#333" stroke-width="0.5"/>
<text x="731.5" y="231.5" font-size="6.3" fill="#333" text-anchor="end">20</text>
<line x1="732.5" x2="734" y1="214.8" y2="214.8" stroke="#333" stroke-width="0.5"/>
<text x="731.5" y="217.0" font-size="6.3" fill="#333" text-anchor="end">40</text>
<line x1="732.5" x2="734" y1="200.4" y2="200.4" stroke="#333" stroke-width="0.5"/>
<text x="731.5" y="202.6" font-size="6.3" fill="#333" text-anchor="end">60</text>
<line x1="732.5" x2="734" y1="185.9" y2="185.9" stroke="#333" stroke-width="0.5"/>
<text x="731.5" y="188.1" font-size="6.3" fill="#333" text-anchor="end">80</text>
<line x1="732.5" x2="734" y1="171.4" y2="171.4" stroke="#333" stroke-width="0.5"/>
<text x="731.5" y="173.6" font-size="6.3" fill="#333" text-anchor="end">100</text>
<line x1="734.3" x2="734.3" y1="171.4" y2="243.8" stroke="#333" stroke-width="0.55"/>
<line x1="734" x2="886" y1="243.8" y2="243.8" stroke="#333" stroke-width="0.55"/>
<rect x="735.4" y="240.2" width="24.1" height="3.6" fill="#3f87ec"/>
<text x="747.5" y="254.6" font-size="6.3" fill="#333" text-anchor="middle">1.69~2....</text>
<line x1="747.5" x2="747.5" y1="243.8" y2="245.20000000000002" stroke="#333" stroke-width="0.5"/>
<rect x="766.2" y="240.2" width="24.3" height="3.6" fill="#3f87ec"/>
<text x="778.4" y="254.6" font-size="6.3" fill="#333" text-anchor="middle">2.68~3....</text>
<line x1="778.4" x2="778.4" y1="243.8" y2="245.20000000000002" stroke="#333" stroke-width="0.5"/>
<rect x="797.3" y="240.9" width="24.3" height="2.9" fill="#3f87ec"/>
<text x="809.5" y="254.6" font-size="6.3" fill="#333" text-anchor="middle">3.66~4....</text>
<line x1="809.5" x2="809.5" y1="243.8" y2="245.20000000000002" stroke="#333" stroke-width="0.5"/>
<rect x="828.4" y="233.7" width="24.3" height="10.1" fill="#3f87ec"/>
<text x="840.5" y="254.6" font-size="6.3" fill="#333" text-anchor="middle">4.64~5....</text>
<line x1="840.5" x2="840.5" y1="243.8" y2="245.20000000000002" stroke="#333" stroke-width="0.5"/>
<rect x="859.5" y="193.1" width="24.5" height="50.7" fill="#3f87ec"/>
<text x="871.8" y="254.6" font-size="6.3" fill="#333" text-anchor="middle">>5.62</text>
<line x1="871.8" x2="871.8" y1="243.8" y2="245.20000000000002" stroke="#333" stroke-width="0.5"/>
<text x="809.5" y="265" font-size="6.400" fill="#333" text-anchor="middle">长(mm)</text>
<text x="711" y="202" font-size="6" fill="#333" text-anchor="middle">粒</text>
<text x="711" y="210" font-size="6" fill="#333" text-anchor="middle">率</text>
<text x="711" y="218.3" font-size="7" fill="#333" text-anchor="middle">%</text>
</svg>
<div class="t" style="left:702px;top:273.500px;font-size:6.600px">列表展示</div>
<div style="position:absolute;left:697.2px;top:283px;width:185.8px;height:180px;overflow:hidden;background:#fff">
<div style="position:absolute;left:0;top:0;width:186px;height:18.7px;background:#1296db;color:#fff;font-size:5.7px;line-height:19.5px">
<span style="position:absolute;left:-2.0px;width:40px;text-align:center">编号</span>
<span style="position:absolute;left:44.7px;width:40px;text-align:center">分段</span>
<span style="position:absolute;left:91.5px;width:40px;text-align:center">长(mm)</span>
<span style="position:absolute;left:137.5px;width:40px;text-align:center">宽(mm)</span>
</div>
<div style="position:absolute;left:0;top:19.20px;width:186px;height:18.5px;background:#ffffff;color:#222;font-size:5.8px;line-height:18.6px">
<span style="position:absolute;left:2.6999999999999993px;width:40px;text-align:center">393</span>
<span style="position:absolute;left:49.2px;width:40px;text-align:center">1.69~2.68</span>
<span style="position:absolute;left:95.9px;width:40px;text-align:center">1.69</span>
<span style="position:absolute;left:142.5px;width:40px;text-align:center">0.59</span>
</div>
<div style="position:absolute;left:0;top:37.62px;width:186px;height:18.5px;background:#f4f4f4;color:#222;font-size:5.8px;line-height:18.6px">
<span style="position:absolute;left:2.6999999999999993px;width:40px;text-align:center">2</span>
<span style="position:absolute;left:49.2px;width:40px;text-align:center">1.69~2.68</span>
<span style="position:absolute;left:95.9px;width:40px;text-align:center">1.78</span>
<span style="position:absolute;left:142.5px;width:40px;text-align:center">1.27</span>
</div>
<div style="position:absolute;left:0;top:56.04px;width:186px;height:18.5px;background:#d9eef9;color:#222;font-size:5.8px;line-height:18.6px">
<span style="position:absolute;left:2.6999999999999993px;width:40px;text-align:center">1</span>
<span style="position:absolute;left:49.2px;width:40px;text-align:center">1.69~2.68</span>
<span style="position:absolute;left:95.9px;width:40px;text-align:center">1.86</span>
<span style="position:absolute;left:142.5px;width:40px;text-align:center">0.76</span>
</div>
<div style="position:absolute;left:0;top:74.46px;width:186px;height:18.5px;background:#f4f4f4;color:#222;font-size:5.8px;line-height:18.6px">
<span style="position:absolute;left:2.6999999999999993px;width:40px;text-align:center">3</span>
<span style="position:absolute;left:49.2px;width:40px;text-align:center">1.69~2.68</span>
<span style="position:absolute;left:95.9px;width:40px;text-align:center">1.86</span>
<span style="position:absolute;left:142.5px;width:40px;text-align:center">1.52</span>
</div>
<div style="position:absolute;left:0;top:92.88px;width:186px;height:18.5px;background:#ffffff;color:#222;font-size:5.8px;line-height:18.6px">
<span style="position:absolute;left:2.6999999999999993px;width:40px;text-align:center">164</span>
<span style="position:absolute;left:49.2px;width:40px;text-align:center">1.69~2.68</span>
<span style="position:absolute;left:95.9px;width:40px;text-align:center">1.86</span>
<span style="position:absolute;left:142.5px;width:40px;text-align:center">1.78</span>
</div>
<div style="position:absolute;left:0;top:111.30px;width:186px;height:18.5px;background:#f4f4f4;color:#222;font-size:5.8px;line-height:18.6px">
<span style="position:absolute;left:2.6999999999999993px;width:40px;text-align:center">348</span>
<span style="position:absolute;left:49.2px;width:40px;text-align:center">1.69~2.68</span>
<span style="position:absolute;left:95.9px;width:40px;text-align:center">2.03</span>
<span style="position:absolute;left:142.5px;width:40px;text-align:center">1.27</span>
</div>
<div style="position:absolute;left:0;top:129.72px;width:186px;height:18.5px;background:#ffffff;color:#222;font-size:5.8px;line-height:18.6px">
<span style="position:absolute;left:2.6999999999999993px;width:40px;text-align:center">66</span>
<span style="position:absolute;left:49.2px;width:40px;text-align:center">1.69~2.68</span>
<span style="position:absolute;left:95.9px;width:40px;text-align:center">2.11</span>
<span style="position:absolute;left:142.5px;width:40px;text-align:center">1.70</span>
</div>
<div style="position:absolute;left:0;top:148.14px;width:186px;height:18.5px;background:#f4f4f4;color:#222;font-size:5.8px;line-height:18.6px">
<span style="position:absolute;left:2.6999999999999993px;width:40px;text-align:center">5</span>
<span style="position:absolute;left:49.2px;width:40px;text-align:center">1.69~2.68</span>
<span style="position:absolute;left:95.9px;width:40px;text-align:center">2.12</span>
<span style="position:absolute;left:142.5px;width:40px;text-align:center">1.69</span>
</div>
<div style="position:absolute;left:0;top:166.56px;width:186px;height:18.5px;background:#ffffff;color:#222;font-size:5.8px;line-height:18.6px">
<span style="position:absolute;left:2.6999999999999993px;width:40px;text-align:center">7</span>
<span style="position:absolute;left:49.2px;width:40px;text-align:center">1.69~2.68</span>
<span style="position:absolute;left:95.9px;width:40px;text-align:center">2.12</span>
<span style="position:absolute;left:142.5px;width:40px;text-align:center">1.95</span>
</div>
</div>
<!-- table scrollbars -->
<div style="position:absolute;left:883px;top:283px;width:7px;height:180px;background:#f0f0f0"></div>
<div style="position:absolute;left:883.500px;top:291.500px;width:6.500px;height:9px;background:#cdcdcd"></div>
<svg style="position:absolute;left:884px;top:285px" width="5" height="4" viewBox="0 0 5 4"><path d="M0.700 3L2.500 1 4.300 3" stroke="#444" stroke-width="0.800" fill="none"/></svg>
<svg style="position:absolute;left:884px;top:457.500px" width="5" height="4" viewBox="0 0 5 4"><path d="M0.700 1L2.500 3 4.300 1" stroke="#444" stroke-width="0.800" fill="none"/></svg>
<div style="position:absolute;left:697px;top:463px;width:193px;height:7.300px;background:#f0f0f0"></div>
<div style="position:absolute;left:705.400px;top:463.600px;width:132px;height:6.400px;background:#cdcdcd"></div>
<svg style="position:absolute;left:699.500px;top:464.300px" width="4" height="5" viewBox="0 0 4 5"><path d="M3 0.700L1 2.500 3 4.300" stroke="#444" stroke-width="0.800" fill="none"/></svg>
<svg style="position:absolute;left:877px;top:464.300px" width="4" height="5" viewBox="0 0 4 5"><path d="M1 0.700L3 2.500 1 4.300" stroke="#444" stroke-width="0.800" fill="none"/></svg>
<svg style="position:absolute;left:0;top:0;pointer-events:none" width="890" height="481" viewBox="0 0 890 481"><defs><clipPath id="notimg"><path clip-rule="evenodd" d="M0 0H890V481H0Z M0 93V463H690V93Z"/></clipPath></defs><g clip-path="url(#notimg)">
<text x="150" y="32" font-size="17" font-weight="bold" fill="#000" fill-opacity="0.045" text-anchor="middle" transform="rotate(-29 150 26)" font-family="'Liberation Sans','Noto Sans CJK SC',sans-serif">托普云农</text>
<text x="693" y="30" font-size="17" font-weight="bold" fill="#000" fill-opacity="0.045" text-anchor="middle" transform="rotate(-29 693 24)" font-family="'Liberation Sans','Noto Sans CJK SC',sans-serif">托普云农</text>
<text x="800" y="149" font-size="17" font-weight="bold" fill="#000" fill-opacity="0.045" text-anchor="middle" transform="rotate(-29 800 143)" font-family="'Liberation Sans','Noto Sans CJK SC',sans-serif">托普云农</text>
<text x="838" y="296" font-size="17" font-weight="bold" fill="#000" fill-opacity="0.045" text-anchor="middle" transform="rotate(-29 838 290)" font-family="'Liberation Sans','Noto Sans CJK SC',sans-serif">托普云农</text>
<text x="800" y="472" font-size="17" font-weight="bold" fill="#000" fill-opacity="0.045" text-anchor="middle" transform="rotate(-29 800 466)" font-family="'Liberation Sans','Noto Sans CJK SC',sans-serif">托普云农</text>
<text x="588" y="103" font-size="17" font-weight="bold" fill="#000" fill-opacity="0.045" text-anchor="middle" transform="rotate(-29 588 97)" font-family="'Liberation Sans','Noto Sans CJK SC',sans-serif">托普云农</text>
<text x="35" y="105" font-size="17" font-weight="bold" fill="#000" fill-opacity="0.045" text-anchor="middle" transform="rotate(-29 35 99)" font-family="'Liberation Sans','Noto Sans CJK SC',sans-serif">托普云农</text>
<text x="250" y="474" font-size="17" font-weight="bold" fill="#000" fill-opacity="0.045" text-anchor="middle" transform="rotate(-29 250 468)" font-family="'Liberation Sans','Noto Sans CJK SC',sans-serif">托普云农</text>
<text x="692" y="219" font-size="17" font-weight="bold" fill="#000" fill-opacity="0.045" text-anchor="middle" transform="rotate(-29 692 213)" font-family="'Liberation Sans','Noto Sans CJK SC',sans-serif">托普云农</text>
</g></svg>
</body></html>
